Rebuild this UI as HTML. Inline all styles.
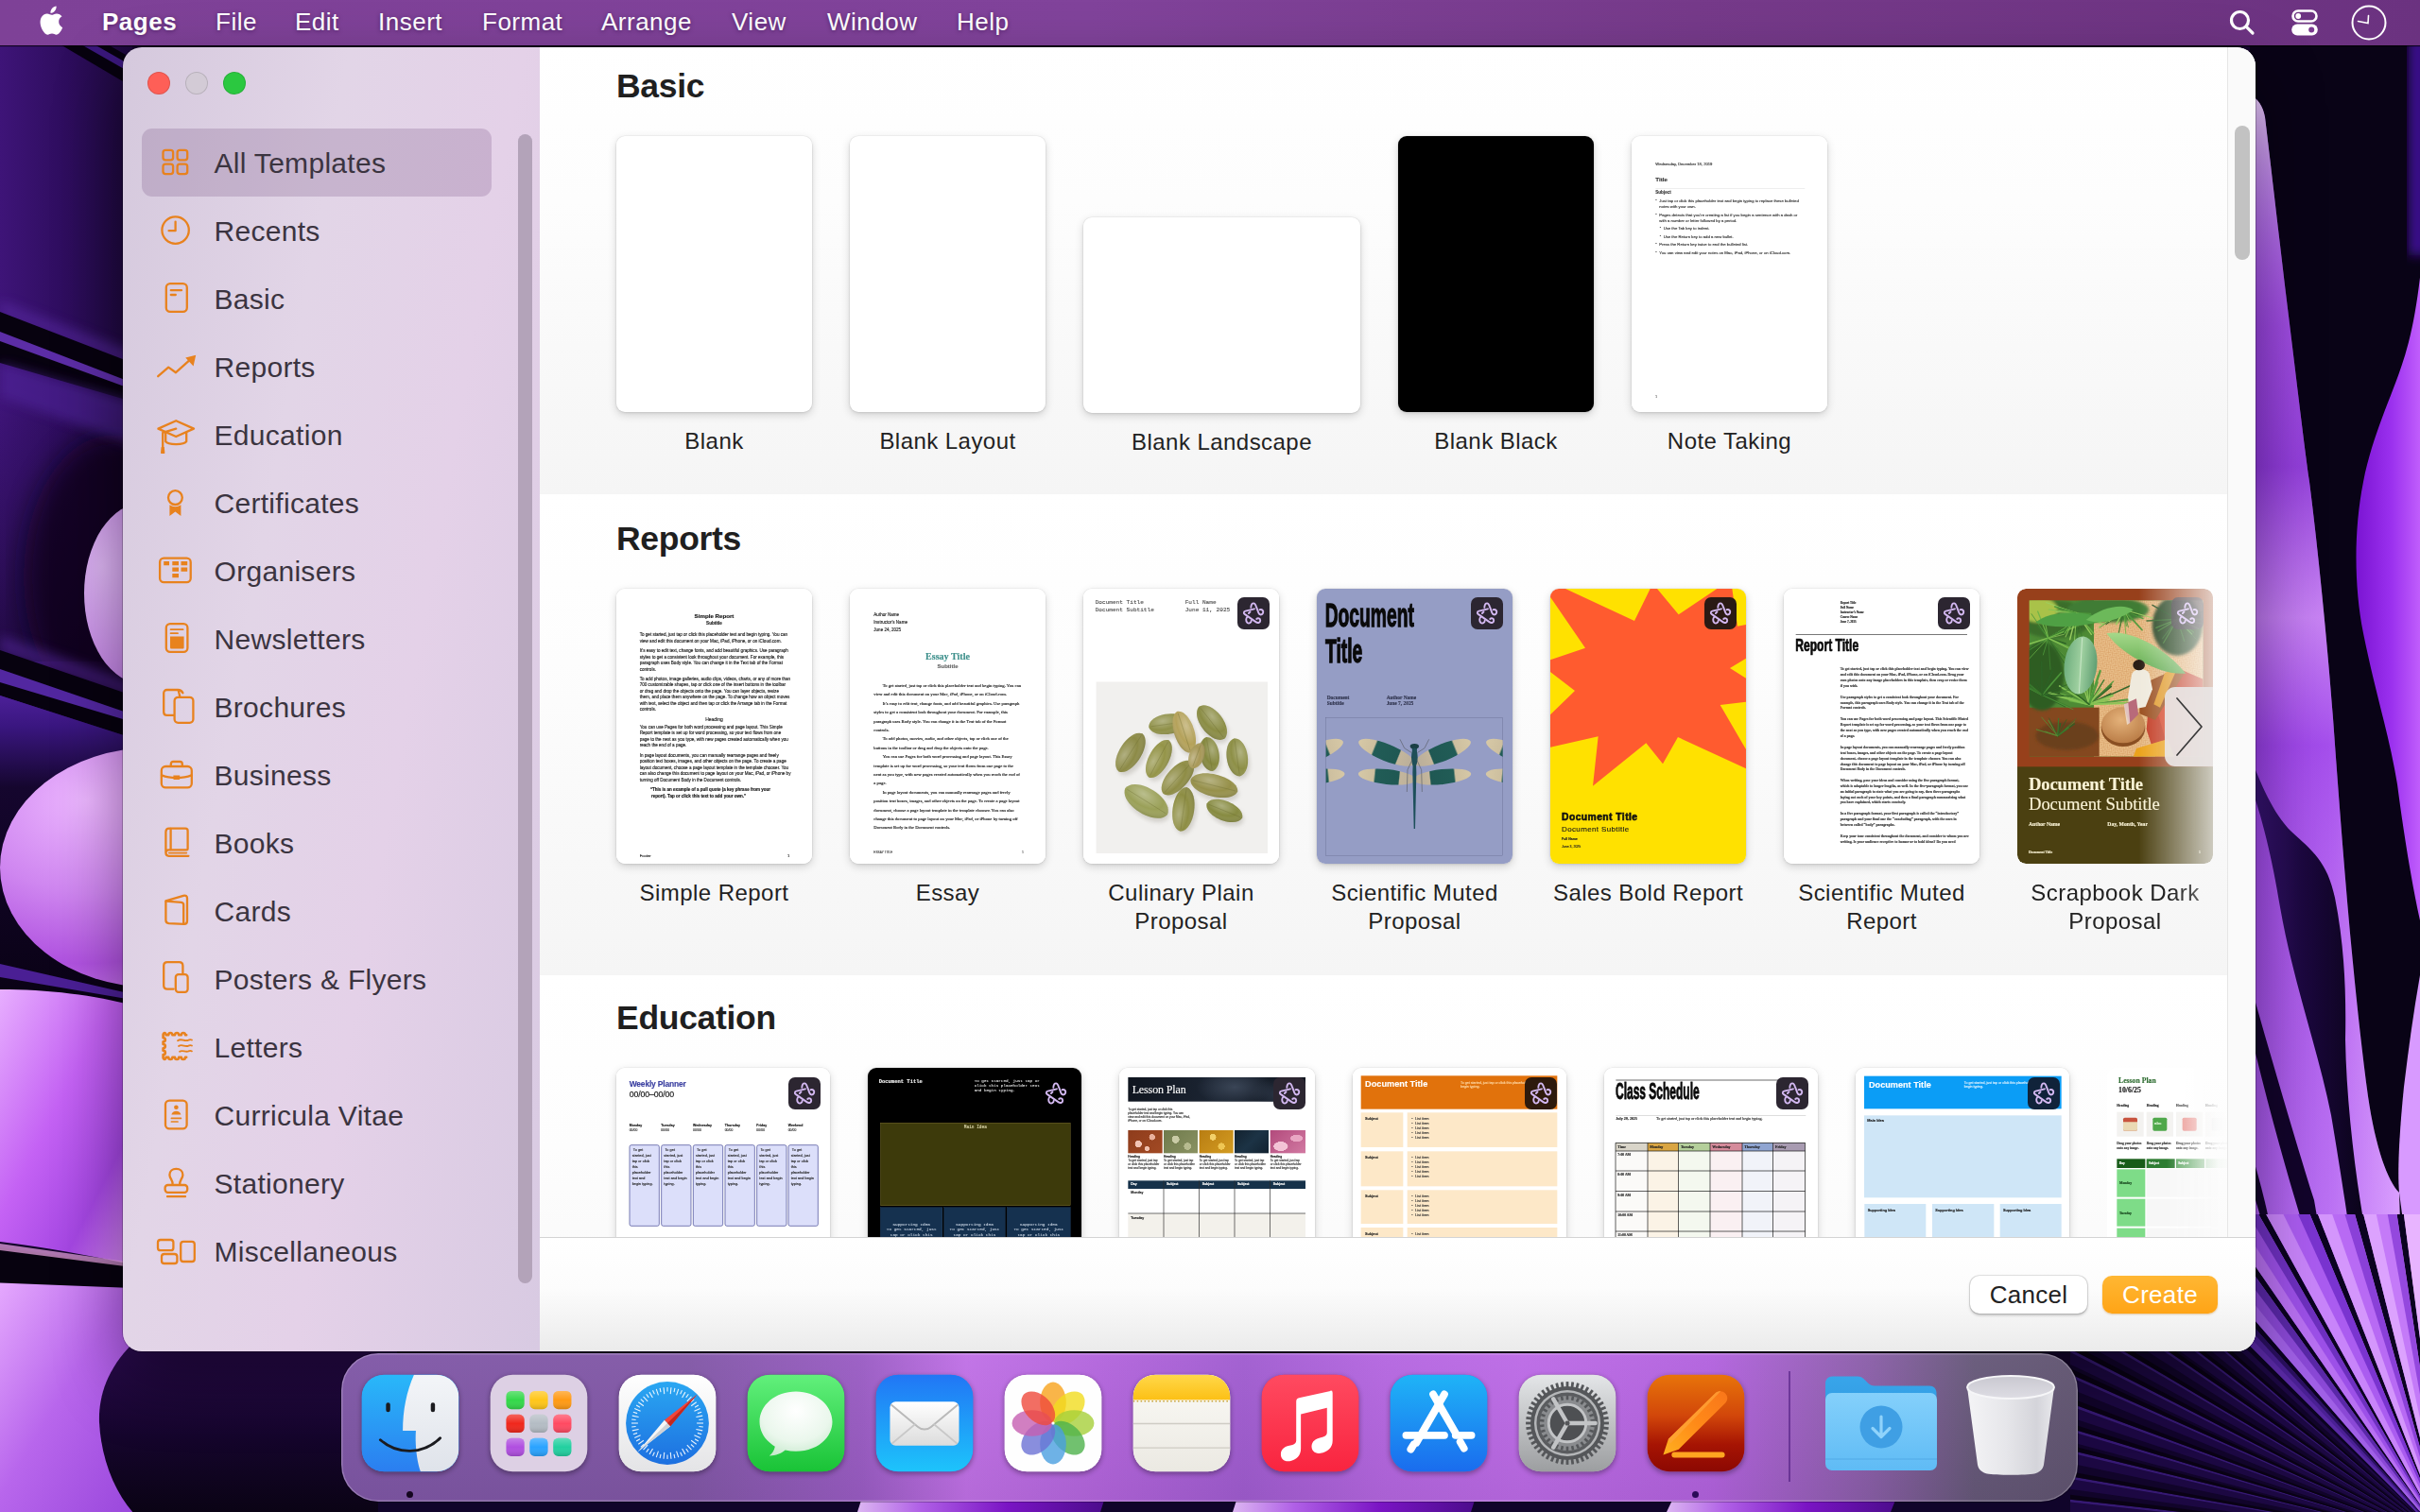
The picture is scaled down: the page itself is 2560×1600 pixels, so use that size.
<!DOCTYPE html>
<html lang="en">
<head>
<meta charset="utf-8">
<title>Pages — Choose a Template</title>
<style>
*{box-sizing:border-box;margin:0;padding:0}
html,body{width:2560px;height:1600px;overflow:hidden;background:#14042a}
body{position:relative;font-family:"Liberation Sans",sans-serif;color:#222}
.abs{position:absolute}
#wall{position:absolute;left:0;top:0;width:2560px;height:1600px}
#menubar{position:absolute;left:0;top:0;width:2560px;height:48px;background:linear-gradient(90deg,#7e4197 0,#81439b 45%,#763a8a 70%,#6b3280 100%);color:#fff;font-size:26px;box-shadow:0 1px 1px rgba(0,0,0,.7)}
#menubar span{position:absolute;top:7px;line-height:32px;white-space:nowrap;letter-spacing:.5px;text-shadow:0 1px 4px rgba(40,0,60,.5)}
#win{position:absolute;left:130px;top:50px;width:2256px;height:1380px;border-radius:20px;overflow:hidden;box-shadow:0 0 0 1px rgba(0,0,0,.22),0 30px 70px rgba(0,0,0,.4)}
#side{position:absolute;left:0;top:0;width:441px;height:1380px;background:linear-gradient(100deg,#d5c9dd 0,#e2d5e7 35%,#e4d1e8 62%,#d8cae2 100%)}
#side .sel{position:absolute;left:20px;top:86px;width:370px;height:72px;border-radius:11px;background:rgba(120,85,130,.25)}
#side .row{position:absolute;left:0;width:420px;height:72px;font-size:30px;line-height:72px;color:#3b3440}
#side .row b{position:absolute;left:96.500px;top:.5px;font-weight:400;white-space:nowrap;letter-spacing:.3px}
#side .row svg{position:absolute;left:31px;top:12px;width:48px;height:48px;fill:none;stroke:#e8821e;stroke-width:2.300;stroke-linecap:round;stroke-linejoin:round}
#side .row svg .f{fill:#e8821e;stroke:none}
#side .sbar{position:absolute;left:418px;top:92px;width:15px;height:1216px;border-radius:8px;background:#b3a3b9}
.tl{position:absolute;top:26px;width:24px;height:24px;border-radius:50%}
#main{position:absolute;left:441px;top:0;width:1815px;height:1380px;background:#fff;overflow:hidden}
.sec{position:absolute;left:0;width:1786px;background:linear-gradient(180deg,#fff 0,#fdfdfd 35%,#f5f5f5 100%)}
.sec h2{position:absolute;left:81px;font-size:35.500px;line-height:40px;font-weight:700;color:#1f1f1f;letter-spacing:-.3px}
.th{position:absolute;border-radius:9px;background:#fff;overflow:hidden;box-shadow:0 0 0 .5px rgba(0,0,0,.06),0 3px 10px rgba(0,0,0,.16),0 1px 3px rgba(0,0,0,.08)}
.lb{position:absolute;width:260px;text-align:center;font-size:24px;line-height:30px;letter-spacing:.45px;color:#222}
.bdg{position:absolute;width:34px;height:34px;border-radius:7px;background:#2c2631}
.bdg svg{position:absolute;left:0;top:0;width:34px;height:34px;fill:none;stroke:#d3b8f1;stroke-width:1.900;stroke-linecap:round;stroke-linejoin:round}
.t{position:absolute;white-space:nowrap;transform-origin:0 0;-webkit-text-stroke:.4px currentColor}
.p{position:absolute;transform-origin:0 0;color:#222;-webkit-text-stroke:.4px currentColor}
#foot{position:absolute;left:0;top:1259px;width:1815px;height:121px;background:linear-gradient(180deg,#fff 0,#fcfcfc 45%,#ebebeb 100%);border-top:1px solid #d4d4d4}
.btn{position:absolute;top:40px;height:40px;border-radius:10px;font-size:26px;line-height:40px;text-align:center;letter-spacing:.3px}
#dock{position:absolute;left:361px;top:1432px;width:1837px;height:157px;border-radius:39px;background:linear-gradient(180deg,rgba(255,255,255,.04) 0,rgba(0,0,0,.06) 100%),linear-gradient(90deg,#7f57a6 0,#8157a6 20%,#9a5cc4 30%,#c070e6 36%,#b264dc 44%,#a05cd0 52%,#b466e0 60%,#bc6ae6 68%,#b262de 79%,#8a5ea8 88%,#665879 94%,#605470 100%);box-shadow:inset 0 0 0 1.500px rgba(255,255,255,.22),0 0 0 1px rgba(0,0,0,.25)}
.di{position:absolute;top:22px;width:104px;height:104px;transform:scale(.987);border-radius:24px;overflow:hidden;box-shadow:0 2px 5px rgba(0,0,0,.3)}
</style>
</head>
<body>
<svg id="wall" viewBox="0 0 2560 1600">
<defs>
<linearGradient id="wl1" x1="0" x2="1" y1="0" y2="0"><stop offset="0" stop-color="#3e1478"/><stop offset=".5" stop-color="#2e0d5e"/><stop offset="1" stop-color="#1c083a"/></linearGradient>
<linearGradient id="wl2" x1="0" x2="0" y1="0" y2="1"><stop offset="0" stop-color="#1a0838" stop-opacity="0"/><stop offset="1" stop-color="#120428" stop-opacity=".9"/></linearGradient>
<linearGradient id="wl3" x1="0" x2="0" y1="0" y2="1"><stop offset="0" stop-color="#4c2098"/><stop offset=".1" stop-color="#3a1680"/><stop offset=".3" stop-color="#15062e"/><stop offset="1" stop-color="#090214"/></linearGradient>
<radialGradient id="pet1" cx=".15" cy=".35" r=".9"><stop offset="0" stop-color="#dcb4f2"/><stop offset=".6" stop-color="#c68ae6"/><stop offset="1" stop-color="#b06ad8"/></radialGradient>
<radialGradient id="pet2" cx=".28" cy=".22" r=".85"><stop offset="0" stop-color="#ecb6ff"/><stop offset=".45" stop-color="#cf86f0"/><stop offset=".8" stop-color="#b052e0"/><stop offset="1" stop-color="#c676ea"/></radialGradient>
<linearGradient id="pet3" x1="0" x2="1" y1="0" y2="1"><stop offset="0" stop-color="#eab4ff"/><stop offset=".45" stop-color="#c462f4"/><stop offset=".75" stop-color="#a446e2"/><stop offset="1" stop-color="#d68cf0"/></linearGradient>
<linearGradient id="pet4" x1="0" x2="1" y1="0" y2="1"><stop offset="0" stop-color="#e8adff"/><stop offset=".5" stop-color="#b866ec"/><stop offset="1" stop-color="#9a48dc"/></linearGradient>
<linearGradient id="dk1" x1="0" x2="0" y1="0" y2="1"><stop offset="0" stop-color="#2a0a4e"/><stop offset=".55" stop-color="#15052c"/><stop offset="1" stop-color="#0a0314"/></linearGradient>
<linearGradient id="rp1" x1="0" x2="1" y1="0" y2="0"><stop offset="0" stop-color="#9a48e0"/><stop offset=".55" stop-color="#b86af0"/><stop offset="1" stop-color="#e2a8ff"/></linearGradient>
<linearGradient id="rp1v" x1="0" x2="0" y1="0" y2="1"><stop offset="0" stop-color="#ecd6f8" stop-opacity=".9"/><stop offset=".1" stop-color="#c898ec" stop-opacity=".5"/><stop offset=".2" stop-color="#8a34d0" stop-opacity=".35"/><stop offset=".32" stop-color="#7a22cc" stop-opacity=".5"/><stop offset=".45" stop-color="#e0a8fa" stop-opacity=".45"/><stop offset=".56" stop-color="#9030e8" stop-opacity=".45"/><stop offset=".75" stop-color="#b060f0" stop-opacity=".15"/><stop offset="1" stop-color="#c890ff" stop-opacity=".3"/></linearGradient>
<linearGradient id="rp2" x1="0" x2="1" y1="0" y2="0"><stop offset="0" stop-color="#7a14d2"/><stop offset=".5" stop-color="#9a30ee"/><stop offset="1" stop-color="#c866ff"/></linearGradient>
<linearGradient id="fold" x1="0" x2="1" y1="0" y2="0"><stop offset="0" stop-color="#3a1478"/><stop offset=".45" stop-color="#1c0840"/><stop offset="1" stop-color="#0a0318"/></linearGradient>
<filter id="b2"><feGaussianBlur stdDeviation="2"/></filter>
<filter id="b6"><feGaussianBlur stdDeviation="6"/></filter>
<filter id="b14"><feGaussianBlur stdDeviation="14"/></filter>
</defs>
<rect width="2560" height="1600" fill="#14052c"/>

<g id="wl">
<rect x="0" y="40" width="140" height="1000" fill="url(#wl1)"/>
<rect x="0" y="430" width="140" height="270" fill="url(#wl2)" opacity=".75"/>
<ellipse cx="120" cy="610" rx="95" ry="150" fill="#0b0218" opacity=".75" filter="url(#b14)"/>
<polygon points="62,46 140,92 140,62 112,46" fill="#07020f"/>
<polygon points="84,46 140,78 140,70 98,46" fill="#3a177c"/>
<polygon points="0,318 140,372 140,392 0,334" fill="#5a2ba4" opacity=".55" filter="url(#b6)"/>
<polygon points="0,330 140,384 140,425 0,384" fill="#07020f"/>
<polygon points="0,351 140,405 140,412 0,361" fill="#5c2da6"/>
<polygon points="0,384 140,425 140,470 0,420" fill="#5326a0" opacity=".55" filter="url(#b6)"/>
<polygon points="0,672 140,722 140,740 0,690" fill="#5a2ba4" opacity=".5" filter="url(#b6)"/>
<polygon points="0,688 140,736 140,781 0,736" fill="#07020f"/>
<polygon points="0,708 140,756 140,764 0,722" fill="#5227a0"/>
<polygon points="0,736 140,781 140,1060 0,1060" fill="url(#wl3)"/>
<ellipse cx="152" cy="628" rx="63" ry="96" fill="url(#pet1)"/>
<ellipse cx="162" cy="918" rx="162" ry="127" fill="url(#pet2)"/>
<path d="M-10,1047 C40,1046 100,1052 140,1064 L140,1338 C90,1328 40,1318 -10,1313 Z" fill="url(#pet3)"/>
<polygon points="0,1020 140,1052 140,1058 0,1034" fill="#4a1f94"/>
<polygon points="0,1320 140,1339 140,1364 0,1358" fill="#07020f"/>
<polygon points="0,1316 140,1336 140,1341 0,1323" fill="#f0a6e8" opacity=".7"/>
<path d="M-10,1357 L140,1363 L140,1600 L-10,1600 Z" fill="url(#pet4)"/>
<path d="M140,1422 C112,1450 104,1480 105,1505 C107,1545 122,1580 142,1602 L420,1602 L420,1422 Z" fill="url(#dk1)"/>
</g>
<rect x="400" y="1575" width="1800" height="25" fill="#10042a"/>
<linearGradient id="bs1" x1="0" x2="1"><stop offset="0" stop-color="#dcb6f2"/><stop offset=".25" stop-color="#b060e6"/><stop offset=".6" stop-color="#7a14c4"/><stop offset="1" stop-color="#4a0c8a"/></linearGradient>
<polygon points="907,1600 915,1575 1172,1575 1164,1600" fill="url(#bs1)"/>
<polygon points="1304,1600 1312,1575 1564,1575 1556,1600" fill="url(#bs1)"/>
<polygon points="1763,1600 1775,1575 2010,1575 2000,1600" fill="url(#bs1)"/>
<g id="wr">
<rect x="2380" y="40" width="180" height="1300" fill="#090316"/>
<rect x="2548" y="40" width="20" height="230" fill="#3a0f8c" filter="url(#b6)"/>
<path d="M2566,236 C2560,300 2556,330 2548,362 C2536,410 2512,450 2500,510 C2490,560 2490,620 2500,670 C2512,730 2528,780 2536,830 C2545,900 2556,960 2566,1000 Z" fill="url(#rp2)"/>
<path d="M2380,100 C2388,104 2394,112 2396,124 C2404,190 2412,260 2418,310 C2428,390 2436,460 2443,510 C2452,580 2462,680 2468,760 C2478,900 2490,1050 2505,1160 C2513,1215 2526,1250 2538,1262 L2540,1330 L2380,1330 Z" fill="url(#rp1)"/>
<path d="M2380,100 C2388,104 2394,112 2396,124 C2404,190 2412,260 2418,310 C2428,390 2436,460 2443,510 C2452,580 2462,680 2468,760 C2478,900 2490,1050 2505,1160 C2513,1215 2526,1250 2538,1262 L2540,1330 L2380,1330 Z" fill="url(#rp1v)"/>
<path d="M2566,1000 C2556,1050 2549,1100 2543,1150 C2538,1200 2536,1240 2538,1262 L2547,1330 L2566,1330 Z" fill="#d89aff"/>
<path d="M2380,800 C2392,830 2404,860 2424,880 C2446,900 2462,912 2470,950 C2480,1000 2482,1050 2481,1100 C2482,1160 2490,1230 2499,1285 L2502,1340 L2490,1340 C2484,1290 2476,1240 2466,1180 C2452,1110 2426,1040 2412,960 C2404,910 2392,860 2380,830 Z" fill="url(#fold)"/>
<path d="M2380,1040 C2400,1110 2426,1200 2448,1270 L2460,1340 L2450,1340 C2430,1280 2404,1190 2380,1090 Z" fill="#12042a"/>
<path d="M2380,1215 C2388,1240 2394,1262 2400,1290 L2392,1290 L2380,1250 Z" fill="#12042a"/>
</g>
<clipPath id="fanclip"><polygon points="2190,1420 2380,1420 2380,1285 2566,1285 2566,1606 2190,1606"/></clipPath>
<g id="fan" clip-path="url(#fanclip)">
<polygon points="2200,1420 2380,1420 2380,1240 2566,1240 2566,1606 2200,1606" fill="#0c0320"/>
<polygon points="2588.0,1632.0 1588.6,1666.9 1893.3,912.7" fill="#11042a"/>
<polygon points="2588.0,1632.0 1588.3,1605.8 1589.4,1579.7" fill="#1f0a48" opacity="0.80"/>
<polygon points="2588.0,1632.0 1589.4,1579.7 1589.8,1572.7" fill="#43208c" opacity="0.75"/>
<polygon points="2588.0,1632.0 1589.8,1572.7 1590.6,1560.5" fill="#07020f" opacity="0.80"/>
<polygon points="2588.0,1632.0 1591.2,1551.8 1593.7,1525.7" fill="#1f0a48" opacity="0.80"/>
<polygon points="2588.0,1632.0 1593.7,1525.7 1594.4,1518.8" fill="#43208c" opacity="0.75"/>
<polygon points="2588.0,1632.0 1594.4,1518.8 1595.9,1506.7" fill="#07020f" opacity="0.80"/>
<polygon points="2588.0,1632.0 1597.9,1492.0 1601.9,1466.1" fill="#1f0a48" opacity="0.80"/>
<polygon points="2588.0,1632.0 1601.9,1466.1 1603.0,1459.2" fill="#43208c" opacity="0.75"/>
<polygon points="2588.0,1632.0 1603.0,1459.2 1605.2,1447.2" fill="#07020f" opacity="0.80"/>
<polygon points="2588.0,1632.0 1609.3,1426.6 1615.0,1401.1" fill="#1f0a48" opacity="0.80"/>
<polygon points="2588.0,1632.0 1615.0,1401.1 1616.7,1394.3" fill="#43208c" opacity="0.75"/>
<polygon points="2588.0,1632.0 1616.7,1394.3 1619.6,1382.5" fill="#07020f" opacity="0.80"/>
<polygon points="2588.0,1632.0 1621.8,1374.0 1628.9,1348.8" fill="#1f0a48" opacity="0.80"/>
<polygon points="2588.0,1632.0 1628.9,1348.8 1630.9,1342.1" fill="#43208c" opacity="0.75"/>
<polygon points="2588.0,1632.0 1630.9,1342.1 1634.5,1330.5" fill="#07020f" opacity="0.80"/>
<polygon points="2588.0,1632.0 1639.1,1316.4 1647.7,1291.6" fill="#1f0a48" opacity="0.80"/>
<polygon points="2588.0,1632.0 1647.7,1291.6 1650.1,1285.1" fill="#43208c" opacity="0.75"/>
<polygon points="2588.0,1632.0 1650.1,1285.1 1654.4,1273.6" fill="#07020f" opacity="0.80"/>
<polygon points="2588.0,1632.0 1662.1,1254.2 1672.3,1230.1" fill="#1f0a48" opacity="0.80"/>
<polygon points="2588.0,1632.0 1672.3,1230.1 1675.2,1223.7" fill="#43208c" opacity="0.75"/>
<polygon points="2588.0,1632.0 1675.2,1223.7 1680.2,1212.5" fill="#07020f" opacity="0.80"/>
<polygon points="2588.0,1632.0 1683.9,1204.6 1695.4,1181.1" fill="#1f0a48" opacity="0.80"/>
<polygon points="2588.0,1632.0 1695.4,1181.1 1698.6,1174.9" fill="#43208c" opacity="0.75"/>
<polygon points="2588.0,1632.0 1698.6,1174.9 1704.2,1164.1" fill="#07020f" opacity="0.80"/>
<polygon points="2588.0,1632.0 1711.3,1151.0 1724.2,1128.2" fill="#1f0a48" opacity="0.80"/>
<polygon points="2588.0,1632.0 1724.2,1128.2 1727.7,1122.2" fill="#43208c" opacity="0.75"/>
<polygon points="2588.0,1632.0 1727.7,1122.2 1734.0,1111.7" fill="#07020f" opacity="0.80"/>
<polygon points="2588.0,1632.0 1745.1,1094.0 1759.5,1072.1" fill="#1f0a48" opacity="0.80"/>
<polygon points="2588.0,1632.0 1759.5,1072.1 1763.4,1066.3" fill="#43208c" opacity="0.75"/>
<polygon points="2588.0,1632.0 1763.4,1066.3 1770.4,1056.3" fill="#07020f" opacity="0.80"/>
<polygon points="2588.0,1632.0 1775.4,1049.2 1790.9,1028.1" fill="#1f0a48" opacity="0.80"/>
<polygon points="2588.0,1632.0 1790.9,1028.1 1795.2,1022.5" fill="#43208c" opacity="0.75"/>
<polygon points="2588.0,1632.0 1795.2,1022.5 1802.7,1012.9" fill="#07020f" opacity="0.80"/>
<polygon points="2588.0,1632.0 1812.0,1001.3 1828.7,981.2" fill="#1f0a48" opacity="0.80"/>
<polygon points="2588.0,1632.0 1828.7,981.2 1833.3,975.9" fill="#43208c" opacity="0.75"/>
<polygon points="2588.0,1632.0 1833.3,975.9 1841.4,966.8" fill="#07020f" opacity="0.80"/>
<polygon points="2588.0,1632.0 1855.5,951.3 1873.5,932.3" fill="#1f0a48" opacity="0.80"/>
<polygon points="2588.0,1632.0 1873.5,932.3 1878.4,927.4" fill="#43208c" opacity="0.75"/>
<polygon points="2588.0,1632.0 1878.4,927.4 1887.1,918.7" fill="#07020f" opacity="0.80"/>
<polygon points="2588.0,1632.0 1868.7,937.3 2640.3,633.4" fill="#0b0320"/>
<polygon points="2588.0,1632.0 1880.9,924.9 1921.5,886.5" fill="#4a2094"/>
<polygon points="2588.0,1632.0 1880.9,924.9 1896.1,910.0" fill="#5a2aa6"/>
<polygon points="2588.0,1632.0 1909.9,897.0 1921.5,886.5" fill="#2a0f60"/>
<polygon points="2588.0,1632.0 1934.6,875.0 2004.5,819.9" fill="#8a48d6"/>
<polygon points="2588.0,1632.0 1934.6,875.0 1960.6,853.3" fill="#a060e6"/>
<polygon points="2588.0,1632.0 1984.4,834.7 2004.5,819.9" fill="#5a28a8"/>
<polygon points="2588.0,1632.0 2018.7,809.9 2091.0,764.2" fill="#9c50e8"/>
<polygon points="2588.0,1632.0 2018.7,809.9 2045.7,791.8" fill="#b870f2"/>
<polygon points="2588.0,1632.0 2070.4,776.4 2091.0,764.2" fill="#6e30c0"/>
<polygon points="2588.0,1632.0 2106.2,755.7 2203.7,708.8" fill="#aa5cf0"/>
<polygon points="2588.0,1632.0 2106.2,755.7 2142.7,736.6" fill="#c884fa"/>
<polygon points="2588.0,1632.0 2175.9,720.9 2203.7,708.8" fill="#7a34d0"/>
<polygon points="2588.0,1632.0 2223.1,700.9 2319.1,668.8" fill="#b86af4"/>
<polygon points="2588.0,1632.0 2223.1,700.9 2259.2,687.6" fill="#d496fc"/>
<polygon points="2588.0,1632.0 2291.9,676.8 2319.1,668.8" fill="#8a40d8"/>
<polygon points="2588.0,1632.0 2342.7,662.6 2438.5,643.2" fill="#c47af8"/>
<polygon points="2588.0,1632.0 2342.7,662.6 2378.9,654.1" fill="#dca2fe"/>
<polygon points="2588.0,1632.0 2411.5,647.7 2438.5,643.2" fill="#9448de"/>
<polygon points="2588.0,1632.0 2459.2,640.3 2622.9,632.6" fill="#d690fb"/>
<polygon points="2588.0,1632.0 2459.2,640.3 2521.2,634.2" fill="#e8b4ff"/>
<polygon points="2588.0,1632.0 2577.0,632.1 2622.9,632.6" fill="#b060ec"/>
</g>
</svg>
<div id="menubar">
<svg class="abs" style="left:40px;top:6px" width="28" height="34" viewBox="0 0 28 34"><path fill="#fff" d="M19.6 0.4c.2 1.9-.5 3.700-1.600 5-1.100 1.400-2.900 2.400-4.600 2.300-.2-1.800.6-3.600 1.600-4.800C16.100 1.500 18.100.5 19.600.4zM25.500 11.300c-.3.200-3.300 1.900-3.300 5.700 0 4.400 3.900 5.900 4 6-.1.100-.6 2.100-2 4.100-1.200 1.800-2.500 3.500-4.500 3.600-1.900 0-2.500-1.200-4.700-1.200s-2.900 1.100-4.700 1.200c-1.900.1-3.400-1.900-4.600-3.700C3.200 23.400 1.200 16.700 3.800 12.200c1.300-2.200 3.600-3.600 6.100-3.700 1.900 0 3.700 1.300 4.800 1.300 1.200 0 3.300-1.600 5.600-1.400 1 .1 3.600.400 5.200 2.900z"/></svg>
<span style="left:108px;font-weight:700">Pages</span>
<span style="left:228px">File</span>
<span style="left:312px">Edit</span>
<span style="left:400px">Insert</span>
<span style="left:510px">Format</span>
<span style="left:636px">Arrange</span>
<span style="left:774px">View</span>
<span style="left:875px">Window</span>
<span style="left:1012px">Help</span>
<svg class="abs" style="left:2354px;top:6px" width="36" height="36" viewBox="0 0 36 36" fill="none" stroke="#fff" stroke-width="3.200" stroke-linecap="round"><circle cx="15.500" cy="15.500" r="9"/><path d="M22.300 22.300L29 29"/></svg>
<svg class="abs" style="left:2422px;top:8px" width="32" height="32" viewBox="0 0 32 32"><rect x="3.500" y="3.500" width="25" height="11" rx="5.500" fill="none" stroke="#fff" stroke-width="2.600"/><circle cx="9.200" cy="9" r="2.900" fill="#fff"/><rect x="2.200" y="17.500" width="27.600" height="12" rx="6" fill="#fff"/><circle cx="23.200" cy="23.500" r="3" fill="#7a3a90"/></svg>
<svg class="abs" style="left:2486px;top:4px" width="40" height="40" viewBox="0 0 40 40" fill="none" stroke="#fff" stroke-width="2" stroke-linecap="round"><circle cx="20" cy="20" r="17.500"/><path d="M8.500 18.500L19 20.500L19.500 12.500" stroke-width="1.600"/></svg>
</div>

<div id="win">
<div id="side">
<div class="tl" style="left:26px;background:#fe5f57;box-shadow:inset 0 0 0 1px rgba(0,0,0,.12)"></div>
<div class="tl" style="left:66px;background:#d3cbd6;box-shadow:inset 0 0 0 1px rgba(0,0,0,.13)"></div>
<div class="tl" style="left:106px;background:#2bc840;box-shadow:inset 0 0 0 1px rgba(0,0,0,.12)"></div>
<div class="sel"></div>
<div class="row" style="top:86px"><svg viewBox="0 0 48 48"><rect x="11.500" y="10.800" width="10.600" height="10.600" rx="2.600"/><rect x="26.600" y="10.800" width="10.600" height="10.600" rx="2.600"/><rect x="11.500" y="25.600" width="10.600" height="10.600" rx="2.600"/><rect x="26.600" y="25.600" width="10.600" height="10.600" rx="2.600"/></svg><b>All Templates</b></div>
<div class="row" style="top:158px"><svg viewBox="0 0 48 48"><circle cx="24.600" cy="23.600" r="14.200"/><path d="M24.600 14.600V24.200H17.600"/></svg><b>Recents</b></div>
<div class="row" style="top:230px"><svg viewBox="0 0 48 48"><rect x="14.800" y="8.100" width="22" height="29.800" rx="4.200"/><path d="M19.800 15.200H31M19.800 20H24.800"/></svg><b>Basic</b></div>
<div class="row" style="top:302px"><svg viewBox="0 0 48 48"><path d="M6.200 34.200L17.200 24.600L25 30.200L39 17.600"/><path class="f" d="M46.200 11.800L35.200 14.600L43.600 23.400Z"/></svg><b>Reports</b></div>
<div class="row" style="top:374px"><svg viewBox="0 0 48 48"><path d="M25.200 9.200L44 17.600L25.200 26L6.400 17.600Z"/><path d="M14.200 22V31.200C16.500 35 33.900 35 36.200 31.200V22"/><path d="M25.200 17.600L11.200 21.800V37.500"/><path class="f" d="M9.600 37h3.200l.6 6.200c0 1.200-4.400 1.200-4.400 0z"/></svg><b>Education</b></div>
<div class="row" style="top:446px"><svg viewBox="0 0 48 48"><circle cx="24.400" cy="18.600" r="7.400"/><path class="f" d="M18.400 26.200c3.600 2.600 8.400 2.600 12 0V38l-6-4.600-6 4.600z"/></svg><b>Certificates</b></div>
<div class="row" style="top:518px"><svg viewBox="0 0 48 48"><rect x="8.100" y="10.700" width="32.600" height="25.400" rx="4.200"/><path class="f" d="M12.200 14h5.800v4.200h-5.800zM21.300 14h6.700v4.200h-6.700zM30.500 14h6.700v4.200h-6.700zM21.300 20.500h6.700v4.200h-6.700zM30.500 20.500h6.700v4.200h-6.700zM21.300 27h6.700v4.200h-6.700z"/></svg><b>Organisers</b></div>
<div class="row" style="top:590px"><svg viewBox="0 0 48 48"><rect x="14.800" y="8.100" width="22.600" height="29.800" rx="4.200"/><path d="M19.600 14.200H32.600M19.600 18.200H27" stroke-width="1.800"/><path class="f" d="M19 21.600h14.600v11.600c0 .8-.6 1.400-1.400 1.400H20.400c-.8 0-1.400-.6-1.400-1.400z"/></svg><b>Newsletters</b></div>
<div class="row" style="top:662px"><svg viewBox="0 0 48 48"><path d="M22.800 32.800H15.600c-2 0-3.400-1.400-3.400-3.400V9.400c0-2 1.400-3.400 3.400-3.400H27.200c2.200 0 4.200 1 5.200 3.200"/><path d="M27.600 6.200L29.400 13.600"/><rect x="23.600" y="13.800" width="19.800" height="27" rx="3.800"/></svg><b>Brochures</b></div>
<div class="row" style="top:734px"><svg viewBox="0 0 48 48"><g transform="translate(0 2.800)"><rect x="9.800" y="12.200" width="32" height="22.400" rx="4.400"/><path d="M19.800 12V9.600c0-1.400 1-2.400 2.400-2.400h7.200c1.400 0 2.400 1 2.400 2.400V12"/><path d="M10 21.600c9 3.600 22.600 3.600 31.600 0"/><path class="f" d="M22.400 21.800h6.800v3.400c0 .6-.4 1-1 1h-4.800c-.6 0-1-.4-1-1z"/></g></svg><b>Business</b></div>
<div class="row" style="top:806px"><svg viewBox="0 0 48 48"><path d="M14.400 34.400V12.200c0-2.200 1.400-3.600 3.600-3.600H35c1.600 0 2.600 1 2.600 2.600V30.200c0 .8-.4 1.200-1.200 1.200H17.600c-4.200 0-4.200 6.400 0 6.400H38.400"/><path d="M19.600 9V31"/><path d="M17.600 34.600H36.400" stroke-width="1.600"/></svg><b>Books</b></div>
<div class="row" style="top:878px"><svg viewBox="0 0 48 48"><path d="M14.400 13.400L33 7.800C35.400 7.200 37 8.200 37 10.600V34.400c0 2-1.200 3.400-3.200 3.400L17.600 37.200c-2-.2-3.200-1.400-3.200-3.400z"/><path d="M14.600 13.600L30.800 14.800c1.600.2 2.400 1 2.400 2.600V37.600"/></svg><b>Cards</b></div>
<div class="row" style="top:950px"><svg viewBox="0 0 48 48"><path d="M22.600 34.600H16c-2.400 0-3.800-1.400-3.800-3.800V10c0-2.400 1.400-3.800 3.800-3.800H28.600c2.400 0 3.800 1.400 3.800 3.800V18"/><rect x="24.800" y="19.200" width="12.800" height="18.600" rx="3"/></svg><b>Posters &amp; Flyers</b></div>
<div class="row" style="top:1022px"><svg viewBox="0 0 48 48"><path d="M36.200 11.200H35c0-3-4.200-3-4.200 0h-2.600c0-3-4.200-3-4.200 0h-2.600c0-3-4.200-3-4.200 0h-2.600c0-3-3.400-2.600-3 .4v2.600c3 0 3 4.200 0 4.200v2.600c3 0 3 4.200 0 4.200v2.600c3 0 3 4.200 0 4.200v2.400c-.4 3 3 3.400 3 .4h2.600c0 3 4.200 3 4.200 0h2.600c0 3 4.200 3 4.200 0h2.600c0 3 4.200 3 4.200 0h1.200" stroke-width="2.600"/><path d="M27 17.200c4-3 7 1.600 11.400-.6c1.400-.8 2.600-.6 3.600 0M28 23c3.600-2.600 6.600 1.400 10.400-.4c1.400-.8 2.600-.6 3.600 0M29 28.800c3.200-2.400 6 1.200 9.400-.4c1.400-.8 2.600-.6 3.600 0" stroke-width="1.800"/></svg><b>Letters</b></div>
<div class="row" style="top:1094px"><svg viewBox="0 0 48 48"><rect x="14" y="8.600" width="22.600" height="29.800" rx="4.200"/><circle class="f" cx="25.400" cy="15.800" r="2.300"/><path class="f" d="M20.400 23.600c.6-5.200 9.400-5.200 10 0z"/><path d="M20.400 27.400H30.400M20.400 31H27" stroke-width="1.700"/></svg><b>Curricula Vitae</b></div>
<div class="row" style="top:1166px"><svg viewBox="0 0 48 48"><path d="M21.600 25.800c1-4-3.200-6.800-3.200-10.600c0-4 3-6.400 7-6.400s7 2.400 7 6.400c0 3.800-4.200 6.600-3.200 10.600"/><rect x="13.600" y="26" width="23.600" height="7.800" rx="3"/><path d="M16 38.200H35"/></svg><b>Stationery</b></div>
<div class="row" style="top:1238px"><svg viewBox="0 0 48 48"><rect x="6" y="12" width="16.400" height="11.200" rx="2.800"/><rect x="10" y="27" width="16.400" height="10" rx="2.800"/><rect x="30.200" y="13.800" width="14.600" height="21.200" rx="2.800"/></svg><b>Miscellaneous</b></div>
<div class="sbar"></div>
</div>
<div id="main">
<div class="sec" style="top:-5px;height:478px"><h2 style="top:25.500px">Basic</h2>
<div class="th" style="left:81px;top:99px;width:207px;height:292px;"></div>
<div class="lb" style="left:54.5px;top:407px;">Blank</div>
<div class="th" style="left:328px;top:99px;width:207px;height:292px;"></div>
<div class="lb" style="left:301.5px;top:407px;">Blank Layout</div>
<div class="th" style="left:575px;top:185px;width:293px;height:207px;"></div>
<div class="lb" style="left:591.5px;top:408px;">Blank Landscape</div>
<div class="th" style="left:908px;top:99px;width:207px;height:292px;background:#000"></div>
<div class="lb" style="left:881.5px;top:407px;">Blank Black</div>
<div class="th" style="left:1155px;top:99px;width:207px;height:292px;"><div class="abs" style="left:0;top:0;width:621px;height:876px;background:#fff;transform:scale(.333333);transform-origin:0 0"><div class="t" style="left:76.0px;top:83.0px;font-size:12.4px;line-height:14.3px;color:#333">Wednesday, December 18, 2019</div><div class="t" style="left:76.0px;top:126.0px;font-size:18.7px;line-height:21.5px;font-weight:700;color:#333">Title</div><div class="abs" style="left:76px;top:166px;width:474px;height:1px;background:#ccc"></div><div class="t" style="left:76.0px;top:171.0px;font-size:13.6px;line-height:15.6px;color:#333;font-weight:700">Subject</div><div class="t" style="left:76.0px;top:197.0px;font-size:12.0px;line-height:13.8px;color:#333">•</div><div class="p" style="left:88.0px;top:196.5px;width:470.0px;font-size:12.70px;line-height:18.00px;color:#333;white-space:nowrap">Just tap or click this placeholder text and begin typing to replace these bulleted<br>notes with your own.</div><div class="t" style="left:76.0px;top:241.0px;font-size:12.0px;line-height:13.8px;color:#333">•</div><div class="p" style="left:88.0px;top:240.5px;width:470.0px;font-size:12.70px;line-height:18.00px;color:#333;white-space:nowrap">Pages detects that you’re creating a list if you begin a sentence with a dash or<br>with a number or letter followed by a period.</div><div class="t" style="left:89.0px;top:284.0px;font-size:12.0px;line-height:13.8px;color:#333">•</div><div class="p" style="left:101.0px;top:283.5px;width:470.0px;font-size:12.70px;line-height:18.00px;color:#333;white-space:nowrap">Use the Tab key to indent.</div><div class="t" style="left:89.0px;top:310.0px;font-size:12.0px;line-height:13.8px;color:#333">•</div><div class="p" style="left:101.0px;top:309.5px;width:470.0px;font-size:12.70px;line-height:18.00px;color:#333;white-space:nowrap">Use the Return key to add a new bullet.</div><div class="t" style="left:76.0px;top:336.0px;font-size:12.0px;line-height:13.8px;color:#333">•</div><div class="p" style="left:88.0px;top:335.5px;width:470.0px;font-size:12.70px;line-height:18.00px;color:#333;white-space:nowrap">Press the Return key twice to end the bulleted list.</div><div class="t" style="left:76.0px;top:362.0px;font-size:12.0px;line-height:13.8px;color:#333">•</div><div class="p" style="left:88.0px;top:361.5px;width:470.0px;font-size:12.70px;line-height:18.00px;color:#333;white-space:nowrap">You can view and edit your notes on Mac, iPad, iPhone, or on iCloud.com.</div><div class="t" style="left:76.0px;top:822.0px;font-size:9.0px;line-height:10.3px;color:#555">1</div></div></div>
<div class="lb" style="left:1128.5px;top:407px;">Note Taking</div>
</div>
<div class="sec" style="top:473px;height:509px"><h2 style="top:27px">Reports</h2>
<div class="th" style="left:81px;top:99.5px;width:207px;height:291px;"><div class="abs" style="left:0;top:0;width:621px;height:876px;background:#fff;transform:scale(.333333);transform-origin:0 0"><div class="t" style="left:0.0px;top:76.0px;font-size:18.5px;line-height:21.3px;width:621px;text-align:center;font-weight:700;color:#111">Simple Report</div><div class="t" style="left:0.0px;top:103.0px;font-size:13.8px;line-height:15.9px;width:621px;text-align:center;font-weight:700;color:#222">Subtitle</div><div class="p" style="left:74.0px;top:137.0px;font-size:13.75px;line-height:19.40px;white-space:nowrap;color:#1a1a1a;white-space:nowrap">To get started, just tap or click this placeholder text and begin typing. You can<br>view and edit this document on your Mac, iPad, iPhone, or on iCloud.com.</div><div class="p" style="left:74.0px;top:188.0px;font-size:13.75px;line-height:19.40px;white-space:nowrap;color:#1a1a1a;white-space:nowrap">It’s easy to edit text, change fonts, and add beautiful graphics. Use paragraph<br>styles to get a consistent look throughout your document. For example, this<br>paragraph uses Body style. You can change it in the Text tab of the Format<br>controls.</div><div class="p" style="left:74.0px;top:277.0px;font-size:13.75px;line-height:19.40px;white-space:nowrap;color:#1a1a1a;white-space:nowrap">To add photos, image galleries, audio clips, videos, charts, or any of more than<br>700 customizable shapes, tap or click one of the insert buttons in the toolbar<br>or drag and drop the objects onto the page. You can layer objects, resize<br>them, and place them anywhere on the page. To change how an object moves<br>with text, select the object and then tap or click the Arrange tab in the Format<br>controls.</div><div class="t" style="left:0.0px;top:406.0px;font-size:15.0px;line-height:17.2px;width:621px;text-align:center;color:#222">Heading</div><div class="p" style="left:74.0px;top:430.0px;font-size:13.75px;line-height:19.40px;white-space:nowrap;color:#1a1a1a;white-space:nowrap">You can use Pages for both word processing and page layout. This Simple<br>Report template is set up for word processing, so your text flows from one<br>page to the next as you type, with new pages created automatically when you<br>reach the end of a page.</div><div class="p" style="left:74.0px;top:519.0px;font-size:13.75px;line-height:19.40px;white-space:nowrap;color:#1a1a1a;white-space:nowrap">In page layout documents, you can manually rearrange pages and freely<br>position text boxes, images, and other objects on the page. To create a page<br>layout document, choose a page layout template in the template chooser. You<br>can also change this document to page layout on your Mac, iPad, or iPhone by<br>turning off Document Body in the Document controls.</div><div class="p" style="left:107.0px;top:629.0px;font-size:13.60px;line-height:20.50px;white-space:nowrap;color:#111;font-weight:700">“This is an example of a pull quote (a key phrase from your<br>&nbsp;report). Tap or click this text to add your own.”</div><div class="t" style="left:74.0px;top:841.0px;font-size:12.5px;line-height:14.4px;color:#222">Footer</div><div class="t" style="left:543.0px;top:841.0px;font-size:12.5px;line-height:14.4px;color:#222">1</div></div></div>
<div class="lb" style="left:54.5px;top:407px;">Simple Report</div>
<div class="th" style="left:328px;top:99.5px;width:207px;height:291px;"><div class="abs" style="left:0;top:0;width:621px;height:876px;background:#fff;transform:scale(.333333);transform-origin:0 0"><div class="t" style="left:76.0px;top:76.0px;font-size:13.6px;line-height:15.6px;color:#222">Author Name</div><div class="t" style="left:76.0px;top:99.5px;font-size:13.6px;line-height:15.6px;color:#222">Instructor’s Name</div><div class="t" style="left:76.0px;top:123.0px;font-size:13.6px;line-height:15.6px;color:#222">June 24, 2025</div><div class="t" style="left:0.0px;top:199.0px;font-size:30.3px;line-height:34.8px;width:621px;text-align:center;font-weight:700;color:#3e908c;font-family:'Liberation Serif',serif;">Essay Title</div><div class="t" style="left:0.0px;top:237.0px;font-size:18.0px;line-height:20.7px;width:621px;text-align:center;font-weight:700;color:#666">Subtitle</div><div class="p" style="left:76.0px;top:293.0px;font-size:14.10px;line-height:28.20px;white-space:nowrap;font-family:'Liberation Serif',serif;color:#1a1a1a;text-indent:28px">To get started, just tap or click this placeholder text and begin typing. You can<br>view and edit this document on your Mac, iPad, iPhone, or on iCloud.com.</div><div class="p" style="left:76.0px;top:349.4px;font-size:14.10px;line-height:28.20px;white-space:nowrap;font-family:'Liberation Serif',serif;color:#1a1a1a;text-indent:28px">It’s easy to edit text, change fonts, and add beautiful graphics. Use paragraph<br>styles to get a consistent look throughout your document. For example, this<br>paragraph uses Body style. You can change it in the Text tab of the Format<br>controls.</div><div class="p" style="left:76.0px;top:462.2px;font-size:14.10px;line-height:28.20px;white-space:nowrap;font-family:'Liberation Serif',serif;color:#1a1a1a;text-indent:28px">To add photos, movies, audio, and other objects, tap or click one of the<br>buttons in the toolbar or drag and drop the objects onto the page.</div><div class="p" style="left:76.0px;top:518.6px;font-size:14.10px;line-height:28.20px;white-space:nowrap;font-family:'Liberation Serif',serif;color:#1a1a1a;text-indent:28px">You can use Pages for both word processing and page layout. This Essay<br>template is set up for word processing, so your text flows from one page to the<br>next as you type, with new pages created automatically when you reach the end of<br>a page.</div><div class="p" style="left:76.0px;top:631.4px;font-size:14.10px;line-height:28.20px;white-space:nowrap;font-family:'Liberation Serif',serif;color:#1a1a1a;text-indent:28px">In page layout documents, you can manually rearrange pages and freely<br>position text boxes, images, and other objects on the page. To create a page layout<br>document, choose a page layout template in the template chooser. You can also<br>change this document to page layout on your Mac, iPad, or iPhone by turning off<br>Document Body in the Document controls.</div><div class="t" style="left:76.0px;top:831.0px;font-size:9.2px;line-height:10.6px;color:#444;letter-spacing:.3px">ESSAY TITLE</div><div class="t" style="left:547.0px;top:832.0px;font-size:8.0px;line-height:9.2px;color:#444">1</div></div></div>
<div class="lb" style="left:301.5px;top:407px;">Essay</div>
<div class="th" style="left:575px;top:99.5px;width:207px;height:291px;"><div class="abs" style="left:0;top:0;width:621px;height:876px;background:#fff;transform:scale(.333333);transform-origin:0 0"><div class="t" style="left:38.0px;top:34.0px;font-size:18.3px;line-height:21.0px;font-family:'Liberation Mono',monospace;color:#4a4a4a;-webkit-text-stroke:.3px #4a4a4a">Document Title</div><div class="t" style="left:38.0px;top:56.5px;font-size:18.3px;line-height:21.0px;font-family:'Liberation Mono',monospace;color:#4a4a4a;-webkit-text-stroke:.3px #4a4a4a">Document Subtitle</div><div class="t" style="left:323.0px;top:34.0px;font-size:18.3px;line-height:21.0px;font-family:'Liberation Mono',monospace;color:#4a4a4a;-webkit-text-stroke:.3px #4a4a4a">Full Name</div><div class="t" style="left:323.0px;top:56.5px;font-size:18.3px;line-height:21.0px;font-family:'Liberation Mono',monospace;color:#4a4a4a;-webkit-text-stroke:.3px #4a4a4a">June 11, 2025</div><svg class="abs" style="left:40px;top:295px" width="545" height="545" viewBox="40 295 545 545"><defs><radialGradient id="podg" cx=".38" cy=".32" r=".8"><stop offset="0" stop-color="#fff" stop-opacity=".32"/><stop offset=".55" stop-color="#fff" stop-opacity="0"/><stop offset="1" stop-color="#2a2a00" stop-opacity=".32"/></radialGradient><filter id="pshadow"><feGaussianBlur stdDeviation="7"/></filter></defs><rect x="40" y="295" width="545" height="545" fill="#f1f0ee"/><ellipse cx="274" cy="442" rx="58" ry="33" transform="rotate(-8 274 442)" fill="#b9b6ae" opacity=".55" filter="url(#pshadow)"/><ellipse cx="326" cy="467" rx="66" ry="33" transform="rotate(72 326 467)" fill="#b9b6ae" opacity=".55" filter="url(#pshadow)"/><ellipse cx="414" cy="437" rx="62" ry="36" transform="rotate(52 414 437)" fill="#b9b6ae" opacity=".55" filter="url(#pshadow)"/><ellipse cx="156" cy="532" rx="68" ry="36" transform="rotate(-58 156 532)" fill="#b9b6ae" opacity=".55" filter="url(#pshadow)"/><ellipse cx="246" cy="552" rx="64" ry="33" transform="rotate(-62 246 552)" fill="#b9b6ae" opacity=".55" filter="url(#pshadow)"/><ellipse cx="406" cy="537" rx="52" ry="31" transform="rotate(80 406 537)" fill="#b9b6ae" opacity=".55" filter="url(#pshadow)"/><ellipse cx="494" cy="547" rx="58" ry="34" transform="rotate(82 494 547)" fill="#b9b6ae" opacity=".55" filter="url(#pshadow)"/><ellipse cx="306" cy="612" rx="66" ry="34" transform="rotate(-48 306 612)" fill="#b9b6ae" opacity=".55" filter="url(#pshadow)"/><ellipse cx="421" cy="637" rx="74" ry="36" transform="rotate(14 421 637)" fill="#b9b6ae" opacity=".55" filter="url(#pshadow)"/><ellipse cx="206" cy="687" rx="76" ry="42" transform="rotate(32 206 687)" fill="#b9b6ae" opacity=".55" filter="url(#pshadow)"/><ellipse cx="324" cy="712" rx="68" ry="35" transform="rotate(-82 324 712)" fill="#b9b6ae" opacity=".55" filter="url(#pshadow)"/><ellipse cx="454" cy="717" rx="58" ry="32" transform="rotate(22 454 717)" fill="#b9b6ae" opacity=".55" filter="url(#pshadow)"/><ellipse cx="366" cy="542" rx="40" ry="24" transform="rotate(-70 366 542)" fill="#b9b6ae" opacity=".55" filter="url(#pshadow)"/><g transform="rotate(-8 268 430)"><path d="M207 430C214 387 321 387 329 430C321 472 214 472 207 430Z" fill="#8f9048"/><path d="M207 430C214 387 321 387 329 430C321 472 214 472 207 430Z" fill="url(#podg)"/><path d="M214 430H322" stroke="#66662c" stroke-width="1.600" opacity=".55" fill="none"/><path d="M216 415C244 403 291 403 320 415" stroke="#a8a860" stroke-width="1.400" opacity=".5" fill="none"/></g><g transform="rotate(72 320 455)"><path d="M251 455C259 412 380 412 389 455C380 497 259 497 251 455Z" fill="#b5a25a"/><path d="M251 455C259 412 380 412 389 455C380 497 259 497 251 455Z" fill="url(#podg)"/><path d="M258 455H382" stroke="#66662c" stroke-width="1.600" opacity=".55" fill="none"/><path d="M260 440C293 428 346 428 380 440" stroke="#a8a860" stroke-width="1.400" opacity=".5" fill="none"/></g><g transform="rotate(52 408 425)"><path d="M343 425C350 378 465 378 473 425C465 471 350 471 343 425Z" fill="#8a8c44"/><path d="M343 425C350 378 465 378 473 425C465 471 350 471 343 425Z" fill="url(#podg)"/><path d="M350 425H466" stroke="#66662c" stroke-width="1.600" opacity=".55" fill="none"/><path d="M352 408C383 396 432 396 464 408" stroke="#a8a860" stroke-width="1.400" opacity=".5" fill="none"/></g><g transform="rotate(-58 150 520)"><path d="M79 520C87 473 212 473 221 520C212 566 87 566 79 520Z" fill="#8c8a46"/><path d="M79 520C87 473 212 473 221 520C212 566 87 566 79 520Z" fill="url(#podg)"/><path d="M86 520H214" stroke="#66662c" stroke-width="1.600" opacity=".55" fill="none"/><path d="M88 503C122 491 177 491 212 503" stroke="#a8a860" stroke-width="1.400" opacity=".5" fill="none"/></g><g transform="rotate(-62 240 540)"><path d="M173 540C181 497 298 497 307 540C298 582 181 582 173 540Z" fill="#949448"/><path d="M173 540C181 497 298 497 307 540C298 582 181 582 173 540Z" fill="url(#podg)"/><path d="M180 540H300" stroke="#66662c" stroke-width="1.600" opacity=".55" fill="none"/><path d="M182 525C214 513 265 513 298 525" stroke="#a8a860" stroke-width="1.400" opacity=".5" fill="none"/></g><g transform="rotate(80 400 525)"><path d="M345 525C352 484 447 484 455 525C447 565 352 565 345 525Z" fill="#85883f"/><path d="M345 525C352 484 447 484 455 525C447 565 352 565 345 525Z" fill="url(#podg)"/><path d="M352 525H448" stroke="#66662c" stroke-width="1.600" opacity=".55" fill="none"/><path d="M354 511C379 500 420 500 446 511" stroke="#a8a860" stroke-width="1.400" opacity=".5" fill="none"/></g><g transform="rotate(82 488 535)"><path d="M427 535C434 490 541 490 549 535C541 579 434 579 427 535Z" fill="#8d8f46"/><path d="M427 535C434 490 541 490 549 535C541 579 434 579 427 535Z" fill="url(#podg)"/><path d="M434 535H542" stroke="#66662c" stroke-width="1.600" opacity=".55" fill="none"/><path d="M436 519C464 507 511 507 540 519" stroke="#a8a860" stroke-width="1.400" opacity=".5" fill="none"/></g><g transform="rotate(-48 300 600)"><path d="M231 600C239 555 360 555 369 600C360 644 239 644 231 600Z" fill="#8e8c45"/><path d="M231 600C239 555 360 555 369 600C360 644 239 644 231 600Z" fill="url(#podg)"/><path d="M238 600H362" stroke="#66662c" stroke-width="1.600" opacity=".55" fill="none"/><path d="M240 584C273 572 326 572 360 584" stroke="#a8a860" stroke-width="1.400" opacity=".5" fill="none"/></g><g transform="rotate(14 415 625)"><path d="M338 625C346 578 483 578 492 625C483 671 346 671 338 625Z" fill="#96904a"/><path d="M338 625C346 578 483 578 492 625C483 671 346 671 338 625Z" fill="url(#podg)"/><path d="M345 625H485" stroke="#66662c" stroke-width="1.600" opacity=".55" fill="none"/><path d="M347 608C385 596 444 596 483 608" stroke="#a8a860" stroke-width="1.400" opacity=".5" fill="none"/></g><g transform="rotate(32 200 675)"><path d="M121 675C130 620 269 620 279 675C269 729 130 729 121 675Z" fill="#9aa058"/><path d="M121 675C130 620 269 620 279 675C269 729 130 729 121 675Z" fill="url(#podg)"/><path d="M128 675H272" stroke="#66662c" stroke-width="1.600" opacity=".55" fill="none"/><path d="M130 656C169 641 230 641 270 656" stroke="#a8a860" stroke-width="1.400" opacity=".5" fill="none"/></g><g transform="rotate(-82 318 700)"><path d="M247 700C255 654 380 654 389 700C380 745 255 745 247 700Z" fill="#8d8d43"/><path d="M247 700C255 654 380 654 389 700C380 745 255 745 247 700Z" fill="url(#podg)"/><path d="M254 700H382" stroke="#66662c" stroke-width="1.600" opacity=".55" fill="none"/><path d="M256 684C290 672 345 672 380 684" stroke="#a8a860" stroke-width="1.400" opacity=".5" fill="none"/></g><g transform="rotate(22 448 705)"><path d="M387 705C394 663 501 663 509 705C501 746 394 746 387 705Z" fill="#868a40"/><path d="M387 705C394 663 501 663 509 705C501 746 394 746 387 705Z" fill="url(#podg)"/><path d="M394 705H502" stroke="#66662c" stroke-width="1.600" opacity=".55" fill="none"/><path d="M396 690C424 679 471 679 500 690" stroke="#a8a860" stroke-width="1.400" opacity=".5" fill="none"/></g><g transform="rotate(-70 360 530)"><path d="M317 530C323 498 396 498 403 530C396 561 323 561 317 530Z" fill="#a89858"/><path d="M317 530C323 498 396 498 403 530C396 561 323 561 317 530Z" fill="url(#podg)"/><path d="M324 530H396" stroke="#66662c" stroke-width="1.600" opacity=".55" fill="none"/><path d="M326 519C344 510 376 510 394 519" stroke="#a8a860" stroke-width="1.400" opacity=".5" fill="none"/></g></svg></div><div class="bdg" style="right:10px;top:9.500px"><svg viewBox="0 0 34 34"><path d="M17.900 12.300L8.400 14.700C6.600 15.200 6.300 16.800 7.700 17.900L19.800 26.400C21.800 27.800 24.300 26.700 24.200 24.500C24.100 22.500 21.800 21.600 20.200 22.900"/><path d="M14.300 10.900C14.500 8.200 15.600 6.400 17.100 6.400C18.500 6.400 19.200 7.800 19.800 9.600L22.400 16.700C23.300 19 26.200 19.100 27.100 16.700C27.900 14.400 26 12.400 23.600 13.200"/><path d="M10.600 20.600C8.900 22.200 8.600 25.400 10.500 26.900C12.300 28.200 14.600 27 14.700 24.800"/><path d="M11.900 17L13.500 15.300"/></svg></div></div>
<div class="lb" style="left:548.5px;top:407px;">Culinary Plain<br>Proposal</div>
<div class="th" style="left:822px;top:99.5px;width:207px;height:291px;"><div class="abs" style="left:0;top:0;width:621px;height:876px;background:#959dc5;transform:scale(.333333);transform-origin:0 0"><div class="t" style="left:26.0px;top:30.0px;font-size:106.0px;line-height:121.9px;font-weight:700;color:#0a0a0a;letter-spacing:0px;-webkit-text-stroke:4px #0a0a0a;transform:scaleX(.545);line-height:106px">Document</div><div class="t" style="left:27.0px;top:144.0px;font-size:106.0px;line-height:121.9px;font-weight:700;color:#0a0a0a;letter-spacing:0px;-webkit-text-stroke:4px #0a0a0a;transform:scaleX(.545);line-height:106px">Title</div><div class="t" style="left:32.0px;top:338.0px;font-size:16.2px;line-height:18.6px;font-family:'Liberation Serif',serif;font-weight:700;color:#30344e">Document</div><div class="t" style="left:32.0px;top:356.3px;font-size:16.2px;line-height:18.6px;font-family:'Liberation Serif',serif;font-weight:700;color:#30344e">Subtitle</div><div class="t" style="left:221.0px;top:338.0px;font-size:16.2px;line-height:18.6px;font-family:'Liberation Serif',serif;font-weight:700;color:#30344e">Author Name</div><div class="t" style="left:221.0px;top:356.3px;font-size:16.2px;line-height:18.6px;font-family:'Liberation Serif',serif;font-weight:700;color:#30344e">June 7, 2025</div><div class="abs" style="left:28px;top:410px;width:563px;height:437px;border:1.500px solid #5e6488"></div><svg class="abs" style="left:29px;top:411px" width="561" height="435" viewBox="29 411 561 435"><defs><linearGradient id="wingR" x1="0" x2="1"><stop offset="0" stop-color="#b8ad9a"/><stop offset=".28" stop-color="#c4b69c"/><stop offset=".3" stop-color="#1f5853"/><stop offset=".7" stop-color="#215c56"/><stop offset=".73" stop-color="#cdbf9f"/><stop offset="1" stop-color="#d6c8a6"/></linearGradient><linearGradient id="wingL" x1="1" x2="0"><stop offset="0" stop-color="#b8ad9a"/><stop offset=".28" stop-color="#c4b69c"/><stop offset=".3" stop-color="#1f5853"/><stop offset=".7" stop-color="#215c56"/><stop offset=".73" stop-color="#cdbf9f"/><stop offset="1" stop-color="#d6c8a6"/></linearGradient></defs><ellipse cx="400" cy="520" rx="95" ry="27" transform="rotate(-22 400 520)" fill="url(#wingR)"/><ellipse cx="398" cy="597" rx="92" ry="24" transform="rotate(-6 398 597)" fill="url(#wingR)"/><ellipse cx="221" cy="520" rx="95" ry="27" transform="rotate(22 221 520)" fill="url(#wingL)"/><ellipse cx="223" cy="597" rx="92" ry="24" transform="rotate(6 223 597)" fill="url(#wingL)"/><ellipse cx="626" cy="520" rx="95" ry="27" transform="rotate(22 626 520)" fill="url(#wingL)"/><ellipse cx="628" cy="597" rx="92" ry="24" transform="rotate(6 628 597)" fill="url(#wingL)"/><ellipse cx="-5" cy="520" rx="95" ry="27" transform="rotate(-22 -5 520)" fill="url(#wingR)"/><ellipse cx="-3" cy="597" rx="92" ry="24" transform="rotate(-6 -3 597)" fill="url(#wingR)"/><path d="M310 498c-5 0-8 4-8 10s3 10 4 16l-2 60 4 178h4l4-178-2-60c1-6 4-10 4-16s-3-10-8-10z" fill="#1d4f5a"/><ellipse cx="310" cy="500" rx="14" ry="8" fill="#1b3f45"/><ellipse cx="310" cy="535" rx="10" ry="30" fill="#1f4f58"/><path d="M300 520l-22-14-14-28M320 520l22-14 14-28M302 545l-14 30-2 70M318 545l14 30 2 70" stroke="#5b5f6a" stroke-width="2" fill="none"/></svg></div><div class="bdg" style="right:10px;top:9.500px"><svg viewBox="0 0 34 34"><path d="M17.900 12.300L8.400 14.700C6.600 15.200 6.300 16.800 7.700 17.900L19.800 26.400C21.800 27.800 24.300 26.700 24.200 24.500C24.100 22.500 21.800 21.600 20.200 22.900"/><path d="M14.300 10.900C14.500 8.200 15.600 6.400 17.100 6.400C18.500 6.400 19.200 7.800 19.800 9.600L22.400 16.700C23.300 19 26.200 19.100 27.100 16.700C27.900 14.400 26 12.400 23.600 13.200"/><path d="M10.600 20.600C8.900 22.200 8.600 25.400 10.500 26.900C12.300 28.200 14.600 27 14.700 24.800"/><path d="M11.900 17L13.500 15.300"/></svg></div></div>
<div class="lb" style="left:795.5px;top:407px;">Scientific Muted<br>Proposal</div>
<div class="th" style="left:1069px;top:99.5px;width:207px;height:291px;"><div class="abs" style="left:0;top:0;width:621px;height:876px;background:#ffe100;transform:scale(.333333);transform-origin:0 0"><svg class="abs" style="left:0;top:0" width="621" height="876" viewBox="0 0 621 876"><polygon points="0,0 48,0 267,102 317,0 339,0 407,82 529,0 577,0 594,119 621,114 621,221 570,252 621,284 621,359 539,369 621,510 621,571 405,471 357,556 304,490 135,626 152,469 0,503 0,400 78,324 0,264 0,226 111,188 0,26" fill="#ff5b2f"/></svg><div class="t" style="left:36.0px;top:706.0px;font-size:31.0px;line-height:35.6px;font-weight:700;color:#111;letter-spacing:1.3px;-webkit-text-stroke:1.6px #111">Document Title</div><div class="t" style="left:36.0px;top:748.0px;font-size:24.0px;line-height:27.6px;color:#1a1a1a;letter-spacing:1.1px">Document Subtitle</div><div class="t" style="left:36.0px;top:789.0px;font-size:10.5px;line-height:12.1px;color:#222;font-weight:700">Full Name</div><div class="t" style="left:36.0px;top:811.0px;font-size:10.5px;line-height:12.1px;color:#222">June 3, 2025</div></div><div class="bdg" style="background:#2a1a14;right:10px;top:9.500px"><svg viewBox="0 0 34 34"><path d="M17.900 12.300L8.400 14.700C6.600 15.200 6.300 16.800 7.700 17.900L19.800 26.400C21.800 27.800 24.300 26.700 24.200 24.500C24.100 22.500 21.800 21.600 20.200 22.900"/><path d="M14.300 10.900C14.500 8.200 15.600 6.400 17.100 6.400C18.500 6.400 19.200 7.800 19.800 9.600L22.400 16.700C23.300 19 26.200 19.100 27.100 16.700C27.900 14.400 26 12.400 23.600 13.200"/><path d="M10.600 20.600C8.900 22.200 8.600 25.400 10.500 26.900C12.300 28.200 14.600 27 14.700 24.800"/><path d="M11.900 17L13.500 15.300"/></svg></div></div>
<div class="lb" style="left:1042.5px;top:407px;">Sales Bold Report</div>
<div class="th" style="left:1316px;top:99.5px;width:207px;height:291px;"><div class="abs" style="left:0;top:0;width:621px;height:876px;background:#fff;transform:scale(.333333);transform-origin:0 0"><div class="t" style="left:179.0px;top:38.5px;font-size:9.6px;line-height:11.0px;font-family:'Liberation Serif',serif;font-weight:700;color:#222">Report Title</div><div class="t" style="left:179.0px;top:53.6px;font-size:9.6px;line-height:11.0px;font-family:'Liberation Serif',serif;font-weight:700;color:#222">Full Name</div><div class="t" style="left:179.0px;top:68.7px;font-size:9.6px;line-height:11.0px;font-family:'Liberation Serif',serif;font-weight:700;color:#222">Instructor’s Name</div><div class="t" style="left:179.0px;top:83.8px;font-size:9.6px;line-height:11.0px;font-family:'Liberation Serif',serif;font-weight:700;color:#222">Course Name</div><div class="t" style="left:179.0px;top:98.9px;font-size:9.6px;line-height:11.0px;font-family:'Liberation Serif',serif;font-weight:700;color:#222">June 7, 2025</div><div class="abs" style="left:38px;top:145px;width:544px;height:1.500px;background:#333"></div><div class="t" style="left:37.0px;top:150.0px;font-size:54.0px;line-height:62.1px;font-weight:700;color:#0a0a0a;transform:scaleX(.67);letter-spacing:0;line-height:60px;-webkit-text-stroke:2.200px #0a0a0a">Report Title</div><div class="p" style="left:179.0px;top:246.0px;width:408.0px;font-size:11.50px;line-height:17.60px;font-family:'Liberation Serif',serif;font-weight:700;color:#333">To get started, just tap or click this placeholder text and begin typing. You can view and edit this document on your Mac, iPad, iPhone, or on iCloud.com. Drag your own photos onto any image placeholders in this template, then crop or resize them if you wish.</div><div class="p" style="left:179.0px;top:335.0px;width:408.0px;font-size:11.50px;line-height:17.60px;font-family:'Liberation Serif',serif;font-weight:700;color:#333">Use paragraph styles to get a consistent look throughout your document. For example, this paragraph uses Body style. You can change it in the Text tab of the Format controls.</div><div class="p" style="left:179.0px;top:406.0px;width:408.0px;font-size:11.50px;line-height:17.60px;font-family:'Liberation Serif',serif;font-weight:700;color:#333">You can use Pages for both word processing and page layout. This Scientific Muted Report template is set up for word processing, so your text flows from one page to the next as you type, with new pages created automatically when you reach the end of a page.</div><div class="p" style="left:179.0px;top:495.0px;width:408.0px;font-size:11.50px;line-height:17.60px;font-family:'Liberation Serif',serif;font-weight:700;color:#333">In page layout documents, you can manually rearrange pages and freely position text boxes, images, and other objects on the page. To create a page layout document, choose a page layout template in the template chooser. You can also change this document to page layout on your Mac, iPad, or iPhone by turning off Document Body in the Document controls.</div><div class="p" style="left:179.0px;top:600.0px;width:408.0px;font-size:11.50px;line-height:17.60px;font-family:'Liberation Serif',serif;font-weight:700;color:#333">When writing, pose your ideas and consider using the five paragraph format, which is adaptable to longer lengths, as well. In the five-paragraph format, you use an initial paragraph to state what you are going to say, then three paragraphs laying out each of your key points, and then a final paragraph summarizing what you have explained, which starts concisely.</div><div class="p" style="left:179.0px;top:706.0px;width:408.0px;font-size:11.50px;line-height:17.60px;font-family:'Liberation Serif',serif;font-weight:700;color:#333">In a five paragraph format, your first paragraph is called the “introductory” paragraph and your final one the “concluding” paragraph, with the ones in between called “body” paragraphs.</div><div class="p" style="left:179.0px;top:778.0px;width:408.0px;font-size:11.50px;line-height:17.60px;font-family:'Liberation Serif',serif;font-weight:700;color:#333">Keep your tone consistent throughout the document, and consider to whom you are writing. Is your audience receptive to humor or to bold ideas? Do you need</div></div><div class="bdg" style="right:10px;top:9.500px"><svg viewBox="0 0 34 34"><path d="M17.900 12.300L8.400 14.700C6.600 15.200 6.300 16.800 7.700 17.900L19.800 26.400C21.800 27.800 24.300 26.700 24.200 24.500C24.100 22.500 21.800 21.600 20.200 22.900"/><path d="M14.300 10.900C14.500 8.200 15.600 6.400 17.100 6.400C18.500 6.400 19.200 7.800 19.800 9.600L22.400 16.700C23.300 19 26.200 19.100 27.100 16.700C27.900 14.400 26 12.400 23.600 13.200"/><path d="M10.600 20.600C8.900 22.200 8.600 25.400 10.500 26.900C12.300 28.200 14.600 27 14.700 24.800"/><path d="M11.900 17L13.500 15.300"/></svg></div></div>
<div class="lb" style="left:1289.5px;top:407px;">Scientific Muted<br>Report</div>
<div class="th" style="left:1563px;top:99.5px;width:207px;height:291px;-webkit-mask-image:linear-gradient(90deg,#000 0,#000 62%,rgba(0,0,0,.25) 100%);box-shadow:none"><div class="abs" style="left:0;top:0;width:621px;height:876px;background:#97401b;transform:scale(.333333);transform-origin:0 0"><div class="abs" style="left:0;top:565px;width:621px;height:311px;background:#4b4011"></div><svg class="abs" style="left:38px;top:37px" width="552" height="496" viewBox="0 0 552 496"><defs><pattern id="tl" width="13" height="13" patternUnits="userSpaceOnUse" patternTransform="rotate(8)"><rect width="13" height="13" fill="#dba56c"/><rect width="11" height="11" fill="#e9bf8a"/><rect x="3" y="3" width="4" height="4" fill="#c9824a" opacity=".6"/></pattern><filter id="pb"><feGaussianBlur stdDeviation="4"/></filter><filter id="pb1"><feGaussianBlur stdDeviation="1.200"/></filter><linearGradient id="lf1" x1="0" x2="1"><stop offset="0" stop-color="#6fae7e"/><stop offset=".5" stop-color="#9fd0a0"/><stop offset="1" stop-color="#5f9e72"/></linearGradient><linearGradient id="lf2" x1="0" x2="0" y1="0" y2="1"><stop offset="0" stop-color="#a6d98a"/><stop offset="1" stop-color="#5aa64a"/></linearGradient><radialGradient id="tb" cx=".45" cy=".35" r=".7"><stop offset="0" stop-color="#e4b27a"/><stop offset="1" stop-color="#b87a44"/></radialGradient></defs><rect width="552" height="496" fill="#4d8a35"/><rect x="205" y="0" width="347" height="496" fill="url(#tl)"/><rect x="0" y="340" width="222" height="156" fill="#84481f"/><polygon points="385,262 470,215 552,250 552,496 400,496 372,410" fill="#c23a22"/><polygon points="400,330 552,300 552,420 440,470" fill="#d9482c" opacity=".8"/><polygon points="340,470 440,440 460,496 330,496" fill="#eba31c"/><polygon points="350,270 470,215 490,235 400,380 350,360" fill="#9a4f1f"/><polygon points="430,230 470,215 415,340 395,330" fill="#e09a2a"/><g filter="url(#pb)"><ellipse cx="80" cy="60" rx="120" ry="60" fill="#3a6d2a"/><ellipse cx="40" cy="240" rx="70" ry="110" fill="#2f5d22"/><ellipse cx="250" cy="30" rx="130" ry="40" fill="#3f7c34"/><ellipse cx="470" cy="80" rx="80" ry="95" fill="#24401c"/><ellipse cx="120" cy="430" rx="100" ry="45" fill="#6a3f1a"/><ellipse cx="30" cy="30" rx="60" ry="40" fill="#a9c24a"/></g><g stroke-linecap="round" fill="none" opacity=".95"><path d="M190 330L174 221" stroke="#86c455" stroke-width="4.8"/><path d="M190 330L259 296" stroke="#2d6226" stroke-width="4.9"/><path d="M190 330L217 258" stroke="#86c455" stroke-width="4.2"/><path d="M190 330L62 293" stroke="#9ccf62" stroke-width="5.5"/><path d="M190 330L218 239" stroke="#86c455" stroke-width="5.6"/><path d="M190 330L216 261" stroke="#4f9a3c" stroke-width="6.3"/><path d="M190 330L128 318" stroke="#6db548" stroke-width="5.4"/><path d="M190 330L259 273" stroke="#2d6226" stroke-width="6.4"/><path d="M190 330L197 213" stroke="#86c455" stroke-width="3.0"/><path d="M190 330L75 299" stroke="#86c455" stroke-width="7.0"/><path d="M190 330L326 328" stroke="#9ccf62" stroke-width="4.0"/><path d="M190 330L267 257" stroke="#4f9a3c" stroke-width="3.3"/><path d="M190 330L261 266" stroke="#3b7a2e" stroke-width="4.5"/><path d="M190 330L325 312" stroke="#4f9a3c" stroke-width="3.9"/><path d="M190 330L253 315" stroke="#86c455" stroke-width="6.9"/><path d="M190 330L169 267" stroke="#9ccf62" stroke-width="3.8"/><path d="M190 330L237 253" stroke="#3b7a2e" stroke-width="4.3"/><path d="M190 330L317 316" stroke="#4f9a3c" stroke-width="3.5"/><path d="M190 330L227 281" stroke="#86c455" stroke-width="6.2"/><path d="M190 330L96 272" stroke="#86c455" stroke-width="5.0"/><path d="M190 330L319 324" stroke="#86c455" stroke-width="5.6"/><path d="M190 330L99 295" stroke="#6db548" stroke-width="3.0"/><path d="M190 330L325 269" stroke="#2d6226" stroke-width="4.2"/><path d="M190 330L264 302" stroke="#86c455" stroke-width="7.0"/><path d="M190 330L225 224" stroke="#4f9a3c" stroke-width="7.0"/><path d="M190 330L125 278" stroke="#2d6226" stroke-width="4.3"/><path d="M60 120L44 173" stroke="#4f9a3c" stroke-width="2.6"/><path d="M60 120L27 81" stroke="#3b7a2e" stroke-width="3.1"/><path d="M60 120L-52 154" stroke="#86c455" stroke-width="4.5"/><path d="M60 120L111 178" stroke="#9ccf62" stroke-width="2.5"/><path d="M60 120L150 62" stroke="#6db548" stroke-width="4.2"/><path d="M60 120L111 199" stroke="#2d6226" stroke-width="2.6"/><path d="M60 120L166 86" stroke="#2d6226" stroke-width="2.2"/><path d="M60 120L115 137" stroke="#2d6226" stroke-width="4.9"/><path d="M60 120L67 219" stroke="#3b7a2e" stroke-width="3.3"/><path d="M60 120L130 72" stroke="#2d6226" stroke-width="2.5"/><path d="M60 120L50 66" stroke="#6db548" stroke-width="3.4"/><path d="M60 120L7 43" stroke="#4f9a3c" stroke-width="2.8"/><path d="M60 120L116 88" stroke="#4f9a3c" stroke-width="2.2"/><path d="M60 120L3 156" stroke="#4f9a3c" stroke-width="2.5"/><path d="M60 120L-1 186" stroke="#6db548" stroke-width="2.3"/><path d="M60 120L113 182" stroke="#3b7a2e" stroke-width="4.0"/><path d="M60 120L27 35" stroke="#6db548" stroke-width="3.8"/><path d="M60 120L134 82" stroke="#3b7a2e" stroke-width="4.1"/><path d="M60 120L110 108" stroke="#9ccf62" stroke-width="2.2"/><path d="M60 120L125 149" stroke="#6db548" stroke-width="5.0"/><path d="M60 120L139 160" stroke="#9ccf62" stroke-width="2.1"/><path d="M60 120L154 80" stroke="#6db548" stroke-width="4.4"/><path d="M150 40L85 37" stroke="#9ccf62" stroke-width="3.4"/><path d="M150 40L246 67" stroke="#4f9a3c" stroke-width="4.6"/><path d="M150 40L115 116" stroke="#86c455" stroke-width="3.1"/><path d="M150 40L195 42" stroke="#4f9a3c" stroke-width="3.9"/><path d="M150 40L54 7" stroke="#9ccf62" stroke-width="3.0"/><path d="M150 40L62 29" stroke="#86c455" stroke-width="3.3"/><path d="M150 40L105 50" stroke="#2d6226" stroke-width="2.1"/><path d="M150 40L113 104" stroke="#6db548" stroke-width="4.9"/><path d="M150 40L237 76" stroke="#9ccf62" stroke-width="4.8"/><path d="M150 40L176 72" stroke="#3b7a2e" stroke-width="2.4"/><path d="M150 40L109 104" stroke="#3b7a2e" stroke-width="4.0"/><path d="M150 40L153 142" stroke="#3b7a2e" stroke-width="3.2"/><path d="M150 40L204 105" stroke="#6db548" stroke-width="4.6"/><path d="M150 40L168 119" stroke="#3b7a2e" stroke-width="2.6"/><path d="M150 40L208 69" stroke="#4f9a3c" stroke-width="4.1"/><path d="M150 40L92 30" stroke="#6db548" stroke-width="2.3"/><path d="M150 40L142 145" stroke="#86c455" stroke-width="3.1"/><path d="M150 40L129 124" stroke="#9ccf62" stroke-width="4.5"/><path d="M150 40L81 20" stroke="#4f9a3c" stroke-width="4.5"/><path d="M150 40L197 108" stroke="#9ccf62" stroke-width="4.1"/><path d="M300 30L287 87" stroke="#2d6226" stroke-width="2.1"/><path d="M300 30L361 58" stroke="#4f9a3c" stroke-width="4.3"/><path d="M300 30L358 94" stroke="#4f9a3c" stroke-width="5.0"/><path d="M300 30L344 46" stroke="#2d6226" stroke-width="4.0"/><path d="M300 30L220 85" stroke="#9ccf62" stroke-width="2.6"/><path d="M300 30L253 59" stroke="#9ccf62" stroke-width="2.0"/><path d="M300 30L307 113" stroke="#6db548" stroke-width="2.7"/><path d="M300 30L244 76" stroke="#2d6226" stroke-width="3.5"/><path d="M300 30L250 30" stroke="#9ccf62" stroke-width="4.7"/><path d="M300 30L392 56" stroke="#9ccf62" stroke-width="3.2"/><path d="M300 30L308 81" stroke="#4f9a3c" stroke-width="3.1"/><path d="M300 30L280 121" stroke="#3b7a2e" stroke-width="3.4"/><path d="M300 30L276 76" stroke="#9ccf62" stroke-width="4.6"/><path d="M300 30L223 87" stroke="#4f9a3c" stroke-width="2.6"/><path d="M300 30L206 61" stroke="#3b7a2e" stroke-width="3.6"/><path d="M300 30L253 66" stroke="#9ccf62" stroke-width="4.6"/><path d="M300 30L321 70" stroke="#86c455" stroke-width="3.0"/><path d="M300 30L314 85" stroke="#4f9a3c" stroke-width="2.7"/><path d="M470 60L514 11" stroke="#2d6226" stroke-width="2.5"/><path d="M470 60L426 135" stroke="#3b7a2e" stroke-width="3.4"/><path d="M470 60L564 60" stroke="#4f9a3c" stroke-width="4.8"/><path d="M470 60L373 65" stroke="#2d6226" stroke-width="4.3"/><path d="M470 60L402 87" stroke="#3b7a2e" stroke-width="3.6"/><path d="M470 60L511 -1" stroke="#1f4a1c" stroke-width="4.0"/><path d="M470 60L559 34" stroke="#3b7a2e" stroke-width="2.9"/><path d="M470 60L516 116" stroke="#1f4a1c" stroke-width="3.7"/><path d="M470 60L492 129" stroke="#2d6226" stroke-width="3.8"/><path d="M470 60L567 77" stroke="#4f9a3c" stroke-width="3.6"/><path d="M470 60L517 57" stroke="#2d6226" stroke-width="4.1"/><path d="M470 60L536 89" stroke="#4f9a3c" stroke-width="4.8"/><path d="M470 60L490 -1" stroke="#3b7a2e" stroke-width="3.4"/><path d="M470 60L516 107" stroke="#4f9a3c" stroke-width="3.6"/><path d="M470 60L521 101" stroke="#2d6226" stroke-width="4.8"/><path d="M470 60L530 123" stroke="#2d6226" stroke-width="2.1"/><path d="M470 60L493 94" stroke="#1f4a1c" stroke-width="3.0"/><path d="M470 60L423 121" stroke="#2d6226" stroke-width="3.5"/><path d="M470 60L391 15" stroke="#1f4a1c" stroke-width="4.2"/><path d="M470 60L442 -28" stroke="#2d6226" stroke-width="3.1"/><path d="M470 60L409 97" stroke="#3b7a2e" stroke-width="3.6"/><path d="M470 60L517 6" stroke="#3b7a2e" stroke-width="3.6"/><path d="M40 300L114 338" stroke="#2d6226" stroke-width="2.7"/><path d="M40 300L137 305" stroke="#2d6226" stroke-width="2.9"/><path d="M40 300L39 195" stroke="#2d6226" stroke-width="4.3"/><path d="M40 300L19 258" stroke="#2d6226" stroke-width="2.4"/><path d="M40 300L-12 257" stroke="#3b7a2e" stroke-width="4.5"/><path d="M40 300L77 212" stroke="#2d6226" stroke-width="2.6"/><path d="M40 300L129 264" stroke="#2d6226" stroke-width="2.6"/><path d="M40 300L142 282" stroke="#3b7a2e" stroke-width="2.3"/><path d="M40 300L101 230" stroke="#4f9a3c" stroke-width="5.0"/><path d="M40 300L128 338" stroke="#3b7a2e" stroke-width="2.3"/><path d="M40 300L-29 263" stroke="#4f9a3c" stroke-width="4.7"/><path d="M40 300L71 257" stroke="#2d6226" stroke-width="2.6"/><path d="M40 300L139 346" stroke="#4f9a3c" stroke-width="2.3"/><path d="M40 300L-49 241" stroke="#3b7a2e" stroke-width="2.2"/><path d="M40 300L-11 256" stroke="#3b7a2e" stroke-width="3.5"/><path d="M40 300L74 225" stroke="#2d6226" stroke-width="3.9"/><path d="M40 300L-7 274" stroke="#3b7a2e" stroke-width="3.4"/><path d="M40 300L108 303" stroke="#2d6226" stroke-width="3.8"/><path d="M90 430L23 410" stroke="#5a8a34" stroke-width="3.8"/><path d="M90 430L143 392" stroke="#2d6226" stroke-width="3.9"/><path d="M90 430L99 391" stroke="#2d6226" stroke-width="4.0"/><path d="M90 430L125 405" stroke="#3b7a2e" stroke-width="3.5"/><path d="M90 430L144 385" stroke="#5a8a34" stroke-width="2.3"/><path d="M90 430L61 381" stroke="#5a8a34" stroke-width="3.5"/><path d="M90 430L127 396" stroke="#2d6226" stroke-width="2.4"/><path d="M90 430L126 403" stroke="#3b7a2e" stroke-width="2.0"/><path d="M90 430L63 374" stroke="#2d6226" stroke-width="2.1"/><path d="M90 430L39 371" stroke="#5a8a34" stroke-width="2.7"/><path d="M90 430L118 379" stroke="#2d6226" stroke-width="2.2"/><path d="M90 430L93 375" stroke="#3b7a2e" stroke-width="3.4"/><path d="M90 430L148 376" stroke="#3b7a2e" stroke-width="2.2"/><path d="M90 430L51 416" stroke="#5a8a34" stroke-width="2.8"/></g><ellipse cx="163" cy="206" rx="52" ry="92" fill="url(#lf1)" transform="rotate(6 163 206)"/><path d="M168 118L158 296" stroke="#d3ecd0" stroke-width="2.500"/><path d="M245 105C320 90 430 150 497 232C440 236 400 215 360 196C320 176 280 150 245 105Z" fill="url(#lf2)"/><path d="M20 70C70 30 170 30 250 62C180 80 90 96 20 70Z" fill="#4fa044"/><path d="M180 62C230 20 300 8 330 30C290 60 230 80 180 62Z" fill="#6cb95a"/><ellipse cx="298" cy="404" rx="70" ry="60" fill="#8a4f22"/><ellipse cx="298" cy="396" rx="69" ry="57" fill="url(#tb)"/><path d="M325 236c8-22 44-24 56-4l10 50-22 56-50 10-6-40z" fill="#efeadd"/><ellipse cx="348" cy="205" rx="19" ry="17" fill="#2b1d15"/><path d="M300 330l40-18 6 50-30 30z" fill="#b86a7a"/><path d="M300 330l14-5 6 64-10 6z" fill="#f2e9e0" opacity=".7"/></svg><div class="t" style="left:36.0px;top:588.0px;font-size:56.0px;line-height:64.4px;font-family:'Liberation Serif',serif;color:#faf3d6;font-weight:700;letter-spacing:-.5px">Document Title</div><div class="t" style="left:36.0px;top:652.0px;font-size:56.0px;line-height:64.4px;font-family:'Liberation Serif',serif;color:#faf3d6;letter-spacing:-.3px">Document Subtitle</div><div class="t" style="left:36.0px;top:738.0px;font-size:17.0px;line-height:19.5px;font-family:'Liberation Serif',serif;color:#faf3d6;font-weight:700">Author Name</div><div class="t" style="left:286.0px;top:738.0px;font-size:17.0px;line-height:19.5px;font-family:'Liberation Serif',serif;color:#faf3d6;font-weight:700">Day, Month, Year</div><div class="t" style="left:36.0px;top:831.0px;font-size:11.4px;line-height:13.1px;font-family:'Liberation Serif',serif;color:#faf3d6;font-weight:700">Document Title</div><div class="t" style="left:576.0px;top:831.0px;font-size:11.4px;line-height:13.1px;font-family:'Liberation Serif',serif;color:#faf3d6;">1</div></div><div class="bdg" style="background:rgba(50,44,52,.85);right:10px;top:9.500px"><svg viewBox="0 0 34 34"><path d="M17.900 12.300L8.400 14.700C6.600 15.200 6.300 16.800 7.700 17.900L19.800 26.400C21.800 27.800 24.300 26.700 24.200 24.500C24.100 22.500 21.800 21.600 20.200 22.900"/><path d="M14.300 10.900C14.500 8.200 15.600 6.400 17.100 6.400C18.500 6.400 19.200 7.800 19.800 9.600L22.400 16.700C23.300 19 26.200 19.100 27.100 16.700C27.900 14.400 26 12.400 23.600 13.200"/><path d="M10.600 20.600C8.900 22.200 8.600 25.400 10.500 26.900C12.300 28.200 14.600 27 14.700 24.800"/><path d="M11.900 17L13.500 15.300"/></svg></div></div>
<div class="lb" style="left:1536.5px;top:407px;-webkit-mask-image:linear-gradient(90deg,#000 0,#000 72%,rgba(0,0,0,.35) 100%)">Scrapbook Dark<br>Proposal</div>
<div class="abs" style="left:1719px;top:203.500px;width:51px;height:84px;background:rgba(232,229,228,.93);border-radius:11px 0 0 11px"><svg class="abs" style="left:0;top:0" width="51" height="84" viewBox="0 0 51 84" fill="none" stroke="#3a3a3a" stroke-width="1.700" stroke-linecap="round" stroke-linejoin="round"><path d="M13 12L39 42L13 72"/></svg></div>
</div>
<div class="sec" style="top:982px;height:520px"><h2 style="top:25px">Education</h2>
<div class="th" style="left:81px;top:98px;width:226px;height:292px;"><div class="abs" style="left:0;top:0;width:678px;height:876px;background:#fff;transform:scale(.333333);transform-origin:0 0"><div class="t" style="left:41.0px;top:38.0px;font-size:25.5px;line-height:29.3px;font-weight:700;color:#3a3fa0;letter-spacing:-.6px">Weekly Planner</div><div class="t" style="left:41.0px;top:69.0px;font-size:26.5px;line-height:30.5px;color:#111;letter-spacing:-.5px">00/00–00/00</div><div class="t" style="left:41.0px;top:176.0px;font-size:10.4px;line-height:12.0px;font-weight:700;color:#111;letter-spacing:.3px">Monday</div><div class="t" style="left:41.0px;top:193.0px;font-size:10.0px;line-height:11.5px;color:#333;letter-spacing:.3px">00/00</div><div class="abs" style="left:41px;top:244px;width:96px;height:259px;background:#dcdffa;border:2.200px solid #3c4190;border-radius:7px"></div><div class="p" style="left:50.0px;top:250.0px;width:90.0px;font-size:11.20px;line-height:18.40px;color:#222;white-space:nowrap;letter-spacing:.2px">&nbsp;To get<br>started, just<br>tap or click<br>this<br>placeholder<br>text and<br>begin typing.</div><div class="t" style="left:142.0px;top:176.0px;font-size:10.4px;line-height:12.0px;font-weight:700;color:#111;letter-spacing:.3px">Tuesday</div><div class="t" style="left:142.0px;top:193.0px;font-size:10.0px;line-height:11.5px;color:#333;letter-spacing:.3px">00/00</div><div class="abs" style="left:142px;top:244px;width:96px;height:259px;background:#dcdffa;border:2.200px solid #3c4190;border-radius:7px"></div><div class="p" style="left:151.0px;top:250.0px;width:90.0px;font-size:11.20px;line-height:18.40px;color:#222;white-space:nowrap;letter-spacing:.2px">&nbsp;To get<br>started, just<br>tap or click<br>this<br>placeholder<br>text and begin<br>typing.</div><div class="t" style="left:243.0px;top:176.0px;font-size:10.4px;line-height:12.0px;font-weight:700;color:#111;letter-spacing:.3px">Wednesday</div><div class="t" style="left:243.0px;top:193.0px;font-size:10.0px;line-height:11.5px;color:#333;letter-spacing:.3px">00/00</div><div class="abs" style="left:243px;top:244px;width:96px;height:259px;background:#dcdffa;border:2.200px solid #3c4190;border-radius:7px"></div><div class="p" style="left:252.0px;top:250.0px;width:90.0px;font-size:11.20px;line-height:18.40px;color:#222;white-space:nowrap;letter-spacing:.2px">&nbsp;To get<br>started, just<br>tap or click<br>this<br>placeholder<br>text and begin<br>typing.</div><div class="t" style="left:344.0px;top:176.0px;font-size:10.4px;line-height:12.0px;font-weight:700;color:#111;letter-spacing:.3px">Thursday</div><div class="t" style="left:344.0px;top:193.0px;font-size:10.0px;line-height:11.5px;color:#333;letter-spacing:.3px">00/00</div><div class="abs" style="left:344px;top:244px;width:96px;height:259px;background:#dcdffa;border:2.200px solid #3c4190;border-radius:7px"></div><div class="p" style="left:353.0px;top:250.0px;width:90.0px;font-size:11.20px;line-height:18.40px;color:#222;white-space:nowrap;letter-spacing:.2px">&nbsp;To get<br>started, just<br>tap or click<br>this<br>placeholder<br>text and begin<br>typing.</div><div class="t" style="left:445.0px;top:176.0px;font-size:10.4px;line-height:12.0px;font-weight:700;color:#111;letter-spacing:.3px">Friday</div><div class="t" style="left:445.0px;top:193.0px;font-size:10.0px;line-height:11.5px;color:#333;letter-spacing:.3px">00/00</div><div class="abs" style="left:445px;top:244px;width:96px;height:259px;background:#dcdffa;border:2.200px solid #3c4190;border-radius:7px"></div><div class="p" style="left:454.0px;top:250.0px;width:90.0px;font-size:11.20px;line-height:18.40px;color:#222;white-space:nowrap;letter-spacing:.2px">&nbsp;To get<br>started, just<br>tap or click<br>this<br>placeholder<br>text and begin<br>typing.</div><div class="t" style="left:545.0px;top:176.0px;font-size:10.4px;line-height:12.0px;font-weight:700;color:#111;letter-spacing:.3px">Weekend</div><div class="t" style="left:545.0px;top:193.0px;font-size:10.0px;line-height:11.5px;color:#333;letter-spacing:.3px">00/00</div><div class="abs" style="left:545px;top:244px;width:96px;height:259px;background:#dcdffa;border:2.200px solid #3c4190;border-radius:7px"></div><div class="p" style="left:554.0px;top:250.0px;width:90.0px;font-size:11.20px;line-height:18.40px;color:#222;white-space:nowrap;letter-spacing:.2px">&nbsp;To get<br>started, just<br>tap or click<br>this<br>placeholder<br>text and begin<br>typing.</div></div><div class="bdg" style="right:10px;top:9.500px"><svg viewBox="0 0 34 34"><path d="M17.900 12.300L8.400 14.700C6.600 15.200 6.300 16.800 7.700 17.900L19.800 26.400C21.800 27.800 24.300 26.700 24.200 24.500C24.100 22.500 21.800 21.600 20.200 22.900"/><path d="M14.300 10.900C14.500 8.200 15.600 6.400 17.100 6.400C18.500 6.400 19.200 7.800 19.800 9.600L22.400 16.700C23.300 19 26.200 19.100 27.100 16.700C27.900 14.400 26 12.400 23.600 13.200"/><path d="M10.600 20.600C8.900 22.200 8.600 25.400 10.500 26.900C12.300 28.200 14.600 27 14.700 24.800"/><path d="M11.900 17L13.500 15.300"/></svg></div></div>
<div class="th" style="left:347px;top:98px;width:226px;height:292px;"><div class="abs" style="left:0;top:0;width:678px;height:876px;background:#000;transform:scale(.333333);transform-origin:0 0"><div class="t" style="left:35.0px;top:34.0px;font-size:16.5px;line-height:19.0px;font-family:'Liberation Mono',monospace;font-weight:700;color:#f2f2f2">Document Title</div><div class="p" style="left:338.0px;top:34.0px;width:280.0px;font-size:12.80px;line-height:15.30px;font-family:'Liberation Mono',monospace;color:#d8d8d8;white-space:nowrap">To get started, just tap or<br>click this placeholder text<br>and begin typing.</div><div class="abs" style="left:40px;top:174px;width:603px;height:264px;background:#3d3a0b;border:1.200px solid #8a7c3c"></div><div class="t" style="left:40.0px;top:180.0px;font-size:13.4px;line-height:15.4px;font-family:'Liberation Mono',monospace;width:603px;text-align:center;color:#d9d4a8">Main Idea</div><div class="abs" style="left:40px;top:443px;width:197px;height:200px;background:#15314f;border:1px solid #274a6c"></div><div class="p" style="left:40.0px;top:489.0px;width:197.0px;font-size:13.20px;line-height:16.50px;font-family:'Liberation Mono',monospace;text-align:center;color:#b9c6d6;white-space:nowrap">Supporting Idea<br>To get started, just<br>tap or click this</div><div class="abs" style="left:242px;top:443px;width:194px;height:200px;background:#15314f;border:1px solid #274a6c"></div><div class="p" style="left:242.0px;top:489.0px;width:194.0px;font-size:13.20px;line-height:16.50px;font-family:'Liberation Mono',monospace;text-align:center;color:#b9c6d6;white-space:nowrap">Supporting Idea<br>To get started, just<br>tap or click this</div><div class="abs" style="left:442px;top:443px;width:201px;height:200px;background:#15314f;border:1px solid #274a6c"></div><div class="p" style="left:442.0px;top:489.0px;width:201.0px;font-size:13.20px;line-height:16.50px;font-family:'Liberation Mono',monospace;text-align:center;color:#b9c6d6;white-space:nowrap">Supporting Idea<br>To get started, just<br>tap or click this</div></div><div class="bdg" style="background:transparent;right:10px;top:9.500px"><svg viewBox="0 0 34 34"><path d="M17.900 12.300L8.400 14.700C6.600 15.200 6.300 16.800 7.700 17.900L19.800 26.400C21.800 27.800 24.300 26.700 24.200 24.500C24.100 22.500 21.800 21.600 20.200 22.900"/><path d="M14.300 10.900C14.500 8.200 15.600 6.400 17.100 6.400C18.500 6.400 19.200 7.800 19.800 9.600L22.400 16.700C23.300 19 26.200 19.100 27.100 16.700C27.900 14.400 26 12.400 23.600 13.200"/><path d="M10.600 20.600C8.900 22.200 8.600 25.400 10.500 26.900C12.300 28.200 14.600 27 14.700 24.800"/><path d="M11.900 17L13.500 15.300"/></svg></div></div>
<div class="th" style="left:613px;top:98px;width:207px;height:292px;"><div class="abs" style="left:0;top:0;width:621px;height:876px;background:#fff;transform:scale(.333333);transform-origin:0 0"><div class="abs" style="left:28px;top:30px;width:563px;height:77px;background:radial-gradient(ellipse 120px 60px at 60% 40%,#3a4556 0,rgba(58,69,86,0) 100%),radial-gradient(ellipse 90px 50px at 85% 70%,#2c3646 0,rgba(44,54,70,0) 100%),linear-gradient(100deg,#0f151f,#1c2533 50%,#10161f)"></div><div class="t" style="left:41.0px;top:50.0px;font-size:36.0px;line-height:41.4px;font-family:'Liberation Serif',serif;color:#fff;letter-spacing:-.4px">Lesson Plan</div><div class="p" style="left:28.0px;top:126.0px;width:300.0px;font-size:9.40px;line-height:11.50px;color:#333;white-space:nowrap">To get started, just tap or click this<br>placeholder text and begin typing. You can<br>view and edit this document on your Mac, iPad,<br>iPhone, or on iCloud.com.</div><div class="abs" style="left:28px;top:198px;width:109px;height:73px;background:radial-gradient(circle at 30% 60%,#f2c4b4 0 12%,rgba(0,0,0,0) 13%),radial-gradient(circle at 70% 30%,#e9b09c 0 10%,rgba(0,0,0,0) 11%),radial-gradient(circle at 55% 80%,#f0c0ae 0 9%,rgba(0,0,0,0) 10%),linear-gradient(135deg,#8e3c1c,#a24a24)"></div><div class="t" style="left:28.0px;top:275.0px;font-size:9.6px;line-height:11.0px;font-weight:700;color:#222">Heading</div><div class="p" style="left:28.0px;top:289.0px;width:110.0px;font-size:9.50px;line-height:11.50px;color:#333;white-space:nowrap">To get started, just tap<br>or click this placeholder<br>text and begin typing.</div><div class="abs" style="left:141px;top:198px;width:108px;height:73px;background:radial-gradient(circle at 35% 40%,#c9cba6 0 14%,rgba(0,0,0,0) 15%),radial-gradient(circle at 70% 70%,#b7bb90 0 12%,rgba(0,0,0,0) 13%),linear-gradient(135deg,#6f7a4c,#8a9262)"></div><div class="t" style="left:141.0px;top:275.0px;font-size:9.6px;line-height:11.0px;font-weight:700;color:#222">Heading</div><div class="p" style="left:141.0px;top:289.0px;width:110.0px;font-size:9.50px;line-height:11.50px;color:#333;white-space:nowrap">To get started, just tap<br>or click this placeholder<br>text and begin typing.</div><div class="abs" style="left:254px;top:198px;width:108px;height:73px;background:radial-gradient(circle at 40% 30%,#f3d06a 0 12%,rgba(0,0,0,0) 13%),radial-gradient(circle at 65% 70%,#efc654 0 12%,rgba(0,0,0,0) 13%),linear-gradient(135deg,#b87d12,#d49c22)"></div><div class="t" style="left:254.0px;top:275.0px;font-size:9.6px;line-height:11.0px;font-weight:700;color:#222">Heading</div><div class="p" style="left:254.0px;top:289.0px;width:110.0px;font-size:9.50px;line-height:11.50px;color:#333;white-space:nowrap">To get started, just tap<br>or click this placeholder<br>text and begin typing.</div><div class="abs" style="left:366px;top:198px;width:108px;height:73px;background:linear-gradient(135deg,#13222f,#1c3345 50%,#122230)"></div><div class="t" style="left:366.0px;top:275.0px;font-size:9.6px;line-height:11.0px;font-weight:700;color:#222">Heading</div><div class="p" style="left:366.0px;top:289.0px;width:110.0px;font-size:9.50px;line-height:11.50px;color:#333;white-space:nowrap">To get started, just tap<br>or click this placeholder<br>text and begin typing.</div><div class="abs" style="left:479px;top:198px;width:112px;height:73px;background:radial-gradient(ellipse at 30% 70%,#f3c3d6 0 20%,rgba(0,0,0,0) 21%),radial-gradient(ellipse at 75% 35%,#e9a7c3 0 16%,rgba(0,0,0,0) 17%),linear-gradient(135deg,#b24a7c,#d27aa2)"></div><div class="t" style="left:479.0px;top:275.0px;font-size:9.6px;line-height:11.0px;font-weight:700;color:#222">Heading</div><div class="p" style="left:479.0px;top:289.0px;width:110.0px;font-size:9.50px;line-height:11.50px;color:#333;white-space:nowrap">To get started, just tap<br>or click this placeholder<br>text and begin typing.</div><div class="abs" style="left:28px;top:358px;width:563px;height:26px;background:#16324a"></div><div class="abs" style="left:28px;top:462px;width:563px;height:120px;background:#f3f1eb"></div><div class="t" style="left:37.0px;top:364.0px;font-size:10.4px;line-height:12.0px;font-weight:700;color:#fff">Day</div><div class="t" style="left:150.0px;top:364.0px;font-size:10.4px;line-height:12.0px;font-weight:700;color:#fff">Subject</div><div class="t" style="left:263.0px;top:364.0px;font-size:10.4px;line-height:12.0px;font-weight:700;color:#fff">Subject</div><div class="t" style="left:375.0px;top:364.0px;font-size:10.4px;line-height:12.0px;font-weight:700;color:#fff">Subject</div><div class="t" style="left:488.0px;top:364.0px;font-size:10.4px;line-height:12.0px;font-weight:700;color:#fff">Subject</div><div class="abs" style="left:140px;top:358px;width:2px;height:230px;background:#2a2a2a"></div><div class="abs" style="left:253px;top:358px;width:2px;height:230px;background:#2a2a2a"></div><div class="abs" style="left:365px;top:358px;width:2px;height:230px;background:#2a2a2a"></div><div class="abs" style="left:478px;top:358px;width:2px;height:230px;background:#2a2a2a"></div><div class="abs" style="left:28px;top:461px;width:563px;height:2px;background:#2a2a2a"></div><div class="t" style="left:37.0px;top:391.0px;font-size:10.4px;line-height:12.0px;font-weight:700;color:#222">Monday</div><div class="t" style="left:37.0px;top:472.0px;font-size:10.4px;line-height:12.0px;font-weight:700;color:#222">Tuesday</div></div><div class="bdg" style="right:10px;top:9.500px"><svg viewBox="0 0 34 34"><path d="M17.900 12.300L8.400 14.700C6.600 15.200 6.300 16.800 7.700 17.900L19.800 26.400C21.800 27.800 24.300 26.700 24.200 24.500C24.100 22.500 21.800 21.600 20.200 22.900"/><path d="M14.300 10.900C14.500 8.200 15.600 6.400 17.100 6.400C18.500 6.400 19.200 7.800 19.800 9.600L22.400 16.700C23.300 19 26.200 19.100 27.100 16.700C27.900 14.400 26 12.400 23.600 13.200"/><path d="M10.600 20.600C8.900 22.200 8.600 25.400 10.500 26.900C12.300 28.200 14.600 27 14.700 24.800"/><path d="M11.900 17L13.500 15.300"/></svg></div></div>
<div class="th" style="left:860px;top:98px;width:226px;height:292px;"><div class="abs" style="left:0;top:0;width:678px;height:876px;background:#fff;transform:scale(.333333);transform-origin:0 0"><div class="abs" style="left:26px;top:25px;width:623px;height:106px;background:#e1720c"></div><div class="t" style="left:39.0px;top:35.0px;font-size:27.6px;line-height:31.7px;font-weight:700;color:#fff">Document Title</div><div class="p" style="left:342.0px;top:39.0px;width:300.0px;font-size:10.80px;line-height:14.00px;color:#ffd9a6;white-space:nowrap">To get started, just tap or click this placeholder text and<br>begin typing.</div><div class="abs" style="left:26px;top:142px;width:134px;height:110px;background:#fde8c8"></div><div class="abs" style="left:173px;top:142px;width:476px;height:110px;background:#fde8c8"></div><div class="t" style="left:39.0px;top:156.0px;font-size:11.5px;line-height:13.2px;font-weight:700;color:#222">Subject</div><div class="t" style="left:187.0px;top:156.0px;font-size:11.0px;line-height:12.6px;color:#333">•</div><div class="t" style="left:198.0px;top:156.0px;font-size:11.8px;line-height:13.6px;color:#333">List item</div><div class="t" style="left:187.0px;top:170.6px;font-size:11.0px;line-height:12.6px;color:#333">•</div><div class="t" style="left:198.0px;top:170.6px;font-size:11.8px;line-height:13.6px;color:#333">List item</div><div class="t" style="left:187.0px;top:185.2px;font-size:11.0px;line-height:12.6px;color:#333">•</div><div class="t" style="left:198.0px;top:185.2px;font-size:11.8px;line-height:13.6px;color:#333">List item</div><div class="t" style="left:187.0px;top:199.8px;font-size:11.0px;line-height:12.6px;color:#333">•</div><div class="t" style="left:198.0px;top:199.8px;font-size:11.8px;line-height:13.6px;color:#333">List item</div><div class="t" style="left:187.0px;top:214.4px;font-size:11.0px;line-height:12.6px;color:#333">•</div><div class="t" style="left:198.0px;top:214.4px;font-size:11.8px;line-height:13.6px;color:#333">List item</div><div class="abs" style="left:26px;top:265px;width:134px;height:111px;background:#fde8c8"></div><div class="abs" style="left:173px;top:265px;width:476px;height:111px;background:#fde8c8"></div><div class="t" style="left:39.0px;top:279.0px;font-size:11.5px;line-height:13.2px;font-weight:700;color:#222">Subject</div><div class="t" style="left:187.0px;top:279.0px;font-size:11.0px;line-height:12.6px;color:#333">•</div><div class="t" style="left:198.0px;top:279.0px;font-size:11.8px;line-height:13.6px;color:#333">List item</div><div class="t" style="left:187.0px;top:293.6px;font-size:11.0px;line-height:12.6px;color:#333">•</div><div class="t" style="left:198.0px;top:293.6px;font-size:11.8px;line-height:13.6px;color:#333">List item</div><div class="t" style="left:187.0px;top:308.2px;font-size:11.0px;line-height:12.6px;color:#333">•</div><div class="t" style="left:198.0px;top:308.2px;font-size:11.8px;line-height:13.6px;color:#333">List item</div><div class="t" style="left:187.0px;top:322.8px;font-size:11.0px;line-height:12.6px;color:#333">•</div><div class="t" style="left:198.0px;top:322.8px;font-size:11.8px;line-height:13.6px;color:#333">List item</div><div class="t" style="left:187.0px;top:337.4px;font-size:11.0px;line-height:12.6px;color:#333">•</div><div class="t" style="left:198.0px;top:337.4px;font-size:11.8px;line-height:13.6px;color:#333">List item</div><div class="abs" style="left:26px;top:388px;width:134px;height:107px;background:#fde8c8"></div><div class="abs" style="left:173px;top:388px;width:476px;height:107px;background:#fde8c8"></div><div class="t" style="left:39.0px;top:402.0px;font-size:11.5px;line-height:13.2px;font-weight:700;color:#222">Subject</div><div class="t" style="left:187.0px;top:402.0px;font-size:11.0px;line-height:12.6px;color:#333">•</div><div class="t" style="left:198.0px;top:402.0px;font-size:11.8px;line-height:13.6px;color:#333">List item</div><div class="t" style="left:187.0px;top:416.6px;font-size:11.0px;line-height:12.6px;color:#333">•</div><div class="t" style="left:198.0px;top:416.6px;font-size:11.8px;line-height:13.6px;color:#333">List item</div><div class="t" style="left:187.0px;top:431.2px;font-size:11.0px;line-height:12.6px;color:#333">•</div><div class="t" style="left:198.0px;top:431.2px;font-size:11.8px;line-height:13.6px;color:#333">List item</div><div class="t" style="left:187.0px;top:445.8px;font-size:11.0px;line-height:12.6px;color:#333">•</div><div class="t" style="left:198.0px;top:445.8px;font-size:11.8px;line-height:13.6px;color:#333">List item</div><div class="t" style="left:187.0px;top:460.4px;font-size:11.0px;line-height:12.6px;color:#333">•</div><div class="t" style="left:198.0px;top:460.4px;font-size:11.8px;line-height:13.6px;color:#333">List item</div><div class="abs" style="left:26px;top:507px;width:134px;height:110px;background:#fde8c8"></div><div class="abs" style="left:173px;top:507px;width:476px;height:110px;background:#fde8c8"></div><div class="t" style="left:39.0px;top:521.0px;font-size:11.5px;line-height:13.2px;font-weight:700;color:#222">Subject</div><div class="t" style="left:187.0px;top:521.0px;font-size:11.0px;line-height:12.6px;color:#333">•</div><div class="t" style="left:198.0px;top:521.0px;font-size:11.8px;line-height:13.6px;color:#333">List item</div><div class="t" style="left:187.0px;top:535.6px;font-size:11.0px;line-height:12.6px;color:#333">•</div><div class="t" style="left:198.0px;top:535.6px;font-size:11.8px;line-height:13.6px;color:#333">List item</div><div class="t" style="left:187.0px;top:550.2px;font-size:11.0px;line-height:12.6px;color:#333">•</div><div class="t" style="left:198.0px;top:550.2px;font-size:11.8px;line-height:13.6px;color:#333">List item</div><div class="t" style="left:187.0px;top:564.8px;font-size:11.0px;line-height:12.6px;color:#333">•</div><div class="t" style="left:198.0px;top:564.8px;font-size:11.8px;line-height:13.6px;color:#333">List item</div><div class="t" style="left:187.0px;top:579.4px;font-size:11.0px;line-height:12.6px;color:#333">•</div><div class="t" style="left:198.0px;top:579.4px;font-size:11.8px;line-height:13.6px;color:#333">List item</div></div><div class="bdg" style="background:#2e1a0c;right:10px;top:9.500px"><svg viewBox="0 0 34 34"><path d="M17.900 12.300L8.400 14.700C6.600 15.200 6.300 16.800 7.700 17.900L19.800 26.400C21.800 27.800 24.300 26.700 24.200 24.500C24.100 22.500 21.800 21.600 20.200 22.900"/><path d="M14.300 10.900C14.500 8.200 15.600 6.400 17.100 6.400C18.500 6.400 19.200 7.800 19.800 9.600L22.400 16.700C23.300 19 26.200 19.100 27.100 16.700C27.900 14.400 26 12.400 23.600 13.200"/><path d="M10.600 20.600C8.900 22.200 8.600 25.400 10.500 26.900C12.300 28.200 14.600 27 14.700 24.800"/><path d="M11.900 17L13.500 15.300"/></svg></div></div>
<div class="th" style="left:1126px;top:98px;width:226px;height:292px;"><div class="abs" style="left:0;top:0;width:678px;height:876px;background:#fff;transform:scale(.333333);transform-origin:0 0"><div class="abs" style="left:37px;top:38px;width:603px;height:1.500px;background:#222"></div><div class="t" style="left:36.0px;top:38.0px;font-size:72.0px;line-height:82.8px;font-weight:700;color:#0a0a0a;transform:scaleX(.5);line-height:72px;letter-spacing:0;-webkit-text-stroke:2.500px #0a0a0a">Class Schedule</div><div class="abs" style="left:37px;top:152px;width:603px;height:1.200px;background:#999"></div><div class="t" style="left:37.0px;top:155.0px;font-size:12.2px;line-height:14.0px;font-family:'Liberation Serif',serif;font-weight:700;color:#222">July 29, 2025</div><div class="t" style="left:165.0px;top:155.0px;font-size:12.2px;line-height:14.0px;font-family:'Liberation Serif',serif;color:#333">To get started, just tap or click this placeholder text and begin typing.</div><div class="abs" style="left:36px;top:238px;width:102px;height:26px;background:#d9d5c9"></div><div class="abs" style="left:36px;top:264px;width:102px;height:330px;background:#fbfaf8"></div><div class="t" style="left:43.0px;top:244.0px;font-size:11.8px;line-height:13.6px;font-family:'Liberation Serif',serif;font-weight:700;color:#222">Time</div><div class="abs" style="left:138px;top:238px;width:98px;height:26px;background:#d9a542"></div><div class="abs" style="left:138px;top:264px;width:98px;height:330px;background:#fbf3e6"></div><div class="t" style="left:145.0px;top:244.0px;font-size:11.8px;line-height:13.6px;font-family:'Liberation Serif',serif;font-weight:700;color:#222">Monday</div><div class="abs" style="left:236px;top:238px;width:100px;height:26px;background:#b4cf9b"></div><div class="abs" style="left:236px;top:264px;width:100px;height:330px;background:#f4f8ef"></div><div class="t" style="left:243.0px;top:244.0px;font-size:11.8px;line-height:13.6px;font-family:'Liberation Serif',serif;font-weight:700;color:#222">Tuesday</div><div class="abs" style="left:336px;top:238px;width:102px;height:26px;background:#d58b9b"></div><div class="abs" style="left:336px;top:264px;width:102px;height:330px;background:#faf0f2"></div><div class="t" style="left:343.0px;top:244.0px;font-size:11.8px;line-height:13.6px;font-family:'Liberation Serif',serif;font-weight:700;color:#222">Wednesday</div><div class="abs" style="left:438px;top:238px;width:98px;height:26px;background:#90a5d1"></div><div class="abs" style="left:438px;top:264px;width:98px;height:330px;background:#f1f3f9"></div><div class="t" style="left:445.0px;top:244.0px;font-size:11.8px;line-height:13.6px;font-family:'Liberation Serif',serif;font-weight:700;color:#222">Thursday</div><div class="abs" style="left:536px;top:238px;width:101px;height:26px;background:#a89bb1"></div><div class="abs" style="left:536px;top:264px;width:101px;height:330px;background:#f5f3f6"></div><div class="t" style="left:543.0px;top:244.0px;font-size:11.8px;line-height:13.6px;font-family:'Liberation Serif',serif;font-weight:700;color:#222">Friday</div><div class="abs" style="left:35px;top:238px;width:1.600px;height:360px;background:#111"></div><div class="abs" style="left:137px;top:238px;width:1.600px;height:360px;background:#111"></div><div class="abs" style="left:235px;top:238px;width:1.600px;height:360px;background:#111"></div><div class="abs" style="left:335px;top:238px;width:1.600px;height:360px;background:#111"></div><div class="abs" style="left:437px;top:238px;width:1.600px;height:360px;background:#111"></div><div class="abs" style="left:535px;top:238px;width:1.600px;height:360px;background:#111"></div><div class="abs" style="left:636px;top:238px;width:1.600px;height:360px;background:#111"></div><div class="abs" style="left:36px;top:237px;width:602px;height:1.600px;background:#111"></div><div class="abs" style="left:36px;top:263px;width:602px;height:1.600px;background:#111"></div><div class="abs" style="left:36px;top:326px;width:602px;height:1.600px;background:#111"></div><div class="abs" style="left:36px;top:391px;width:602px;height:1.600px;background:#111"></div><div class="abs" style="left:36px;top:455px;width:602px;height:1.600px;background:#111"></div><div class="abs" style="left:36px;top:518px;width:602px;height:1.600px;background:#111"></div><div class="abs" style="left:36px;top:582px;width:602px;height:1.600px;background:#111"></div><div class="t" style="left:43.0px;top:269.0px;font-size:11.2px;line-height:12.9px;font-family:'Liberation Serif',serif;font-weight:700;color:#222">7:00 AM</div><div class="t" style="left:43.0px;top:332.0px;font-size:11.2px;line-height:12.9px;font-family:'Liberation Serif',serif;font-weight:700;color:#222">8:00 AM</div><div class="t" style="left:43.0px;top:397.0px;font-size:11.2px;line-height:12.9px;font-family:'Liberation Serif',serif;font-weight:700;color:#222">9:00 AM</div><div class="t" style="left:43.0px;top:461.0px;font-size:11.2px;line-height:12.9px;font-family:'Liberation Serif',serif;font-weight:700;color:#222">10:00 AM</div><div class="t" style="left:43.0px;top:524.0px;font-size:11.2px;line-height:12.9px;font-family:'Liberation Serif',serif;font-weight:700;color:#222">11:00 AM</div></div><div class="bdg" style="right:10px;top:9.500px"><svg viewBox="0 0 34 34"><path d="M17.900 12.300L8.400 14.700C6.600 15.200 6.300 16.800 7.700 17.900L19.800 26.400C21.800 27.800 24.300 26.700 24.200 24.500C24.100 22.500 21.800 21.600 20.200 22.900"/><path d="M14.300 10.900C14.500 8.200 15.600 6.400 17.100 6.400C18.500 6.400 19.200 7.800 19.800 9.600L22.400 16.700C23.300 19 26.200 19.100 27.100 16.700C27.900 14.400 26 12.400 23.600 13.200"/><path d="M10.600 20.600C8.900 22.200 8.600 25.400 10.500 26.900C12.300 28.200 14.600 27 14.700 24.800"/><path d="M11.900 17L13.500 15.300"/></svg></div></div>
<div class="th" style="left:1392px;top:98px;width:226px;height:292px;"><div class="abs" style="left:0;top:0;width:678px;height:876px;background:#fff;transform:scale(.333333);transform-origin:0 0"><div class="abs" style="left:27px;top:26px;width:626px;height:104px;background:#0b9df6"></div><div class="t" style="left:42.0px;top:37.0px;font-size:27.4px;line-height:31.5px;font-weight:700;color:#fff">Document Title</div><div class="p" style="left:344.0px;top:39.0px;width:300.0px;font-size:10.80px;line-height:14.00px;color:#d8efff;white-space:nowrap">To get started, just tap or click this placeholder text and<br>begin typing.</div><div class="abs" style="left:27px;top:151px;width:626px;height:261px;background:#cfe6f7"></div><div class="t" style="left:37.0px;top:162.0px;font-size:11.5px;line-height:13.2px;font-weight:700;color:#1a1a1a">Main Idea</div><div class="abs" style="left:28px;top:432px;width:195px;height:200px;background:#cfe6f7"></div><div class="t" style="left:38.0px;top:445.0px;font-size:11.5px;line-height:13.2px;font-weight:700;color:#1a1a1a">Supporting Idea</div><div class="abs" style="left:243px;top:432px;width:196px;height:200px;background:#cfe6f7"></div><div class="t" style="left:253.0px;top:445.0px;font-size:11.5px;line-height:13.2px;font-weight:700;color:#1a1a1a">Supporting Idea</div><div class="abs" style="left:458px;top:432px;width:195px;height:200px;background:#cfe6f7"></div><div class="t" style="left:468.0px;top:445.0px;font-size:11.5px;line-height:13.2px;font-weight:700;color:#1a1a1a">Supporting Idea</div></div><div class="bdg" style="background:#10233a;right:10px;top:9.500px"><svg viewBox="0 0 34 34"><path d="M17.900 12.300L8.400 14.700C6.600 15.200 6.300 16.800 7.700 17.900L19.800 26.400C21.800 27.800 24.300 26.700 24.200 24.500C24.100 22.500 21.800 21.600 20.200 22.900"/><path d="M14.300 10.900C14.500 8.200 15.600 6.400 17.100 6.400C18.500 6.400 19.200 7.800 19.800 9.600L22.400 16.700C23.300 19 26.200 19.100 27.100 16.700C27.900 14.400 26 12.400 23.600 13.200"/><path d="M10.600 20.600C8.900 22.200 8.600 25.400 10.500 26.900C12.300 28.200 14.600 27 14.700 24.800"/><path d="M11.900 17L13.500 15.300"/></svg></div></div>
<div class="th" style="left:1658px;top:98px;width:226px;height:292px;-webkit-mask-image:linear-gradient(90deg,#000 0,#000 28%,rgba(0,0,0,.06) 52%,rgba(0,0,0,0) 60%);box-shadow:none"><div class="abs" style="left:0;top:0;width:678px;height:876px;background:#fff;transform:scale(.333333);transform-origin:0 0"><div class="t" style="left:36.0px;top:28.0px;font-size:23.2px;line-height:26.7px;font-family:'Liberation Serif',serif;font-weight:700;color:#2c6b2f">Lesson Plan</div><div class="t" style="left:36.0px;top:57.0px;font-size:23.5px;line-height:27.0px;font-family:'Liberation Serif',serif;font-weight:700;color:#111">10/6/25</div><div class="t" style="left:31.0px;top:115.0px;font-size:10.6px;line-height:12.2px;font-family:'Liberation Serif',serif;font-weight:700;color:#222">Heading</div><div class="abs" style="left:31px;top:140px;width:85px;height:78px;background:#f3f2f0"></div><div class="abs" style="left:51px;top:158px;width:45px;height:42px;background:#c8533e;border-radius:5px"></div><div class="p" style="left:31.0px;top:231.0px;width:90.0px;font-size:10.40px;line-height:15.00px;font-family:'Liberation Serif',serif;font-weight:700;color:#333;white-space:nowrap">Drag your photos<br>onto any image.</div><div class="t" style="left:125.0px;top:115.0px;font-size:10.6px;line-height:12.2px;font-family:'Liberation Serif',serif;font-weight:700;color:#222">Heading</div><div class="abs" style="left:125px;top:140px;width:85px;height:78px;background:#f3f2f0"></div><div class="abs" style="left:145px;top:158px;width:45px;height:42px;background:#4fa84a;border-radius:5px"></div><div class="p" style="left:125.0px;top:231.0px;width:90.0px;font-size:10.40px;line-height:15.00px;font-family:'Liberation Serif',serif;font-weight:700;color:#333;white-space:nowrap">Drag your photos<br>onto any image.</div><div class="t" style="left:219.0px;top:115.0px;font-size:10.6px;line-height:12.2px;font-family:'Liberation Serif',serif;font-weight:700;color:#222">Heading</div><div class="abs" style="left:219px;top:140px;width:85px;height:78px;background:#f3f2f0"></div><div class="abs" style="left:239px;top:158px;width:45px;height:42px;background:#e88b86;border-radius:5px"></div><div class="p" style="left:219.0px;top:231.0px;width:90.0px;font-size:10.40px;line-height:15.00px;font-family:'Liberation Serif',serif;font-weight:700;color:#333;white-space:nowrap">Drag your photos<br>onto any image.</div><div class="t" style="left:312.0px;top:115.0px;font-size:10.6px;line-height:12.2px;font-family:'Liberation Serif',serif;font-weight:700;color:#222">Heading</div><div class="abs" style="left:312px;top:140px;width:85px;height:78px;background:#f3f2f0"></div><div class="abs" style="left:332px;top:158px;width:45px;height:42px;background:#ddd;border-radius:5px"></div><div class="p" style="left:312.0px;top:231.0px;width:90.0px;font-size:10.40px;line-height:15.00px;font-family:'Liberation Serif',serif;font-weight:700;color:#333;white-space:nowrap">Drag your photos<br>onto any image.</div><div class="abs" style="left:51px;top:172px;width:45px;height:28px;background:#ead9b4;border-radius:0 0 5px 5px"></div><div class="t" style="left:150.0px;top:169.0px;font-size:13.0px;line-height:14.9px;font-weight:700;color:#d9f2d2">abc</div><div class="abs" style="left:31px;top:289px;width:90px;height:29px;background:#175c19"></div><div class="abs" style="left:125px;top:289px;width:90px;height:29px;background:#2d7d32"></div><div class="abs" style="left:219px;top:289px;width:90px;height:29px;background:#5aa45e"></div><div class="abs" style="left:313px;top:289px;width:90px;height:29px;background:#9cc99e"></div><div class="t" style="left:38.0px;top:296.0px;font-size:10.4px;line-height:12.0px;font-family:'Liberation Serif',serif;font-weight:700;color:#fff">Day</div><div class="t" style="left:132.0px;top:296.0px;font-size:10.4px;line-height:12.0px;font-family:'Liberation Serif',serif;font-weight:700;color:#fff">Subject</div><div class="t" style="left:226.0px;top:296.0px;font-size:10.4px;line-height:12.0px;font-family:'Liberation Serif',serif;font-weight:700;color:#fff">Subject</div><div class="abs" style="left:31px;top:322px;width:90px;height:88px;background:#7edc88"></div><div class="t" style="left:39.0px;top:360.0px;font-size:11.0px;line-height:12.6px;font-family:'Liberation Serif',serif;font-weight:700;color:#14401a">Monday</div><div class="abs" style="left:125px;top:322px;width:280px;height:88px;background:#f7f7f7"></div><div class="abs" style="left:31px;top:416px;width:90px;height:87px;background:#7edc88"></div><div class="t" style="left:39.0px;top:454.0px;font-size:11.0px;line-height:12.6px;font-family:'Liberation Serif',serif;font-weight:700;color:#14401a">Tuesday</div><div class="abs" style="left:125px;top:416px;width:280px;height:87px;background:#f7f7f7"></div><div class="abs" style="left:31px;top:509px;width:90px;height:90px;background:#7edc88"></div><div class="t" style="left:39.0px;top:547.0px;font-size:11.0px;line-height:12.6px;font-family:'Liberation Serif',serif;font-weight:700;color:#14401a"></div><div class="abs" style="left:125px;top:509px;width:280px;height:90px;background:#f7f7f7"></div></div></div>
</div>
<div class="abs" style="left:1785px;top:0;width:30px;height:1260px;background:#fafafa;border-left:1px solid #e6e6e6"></div>
<div class="abs" style="left:1793px;top:83px;width:16px;height:142px;border-radius:8px;background:#c2c2c2"></div>
<div id="foot"><div class="btn" style="left:1513px;width:124px;background:#fff;color:#222;box-shadow:0 0 0 .8px rgba(0,0,0,.12),0 1.500px 3px rgba(0,0,0,.22)">Cancel</div><div class="btn" style="left:1653px;width:122px;background:linear-gradient(180deg,#ffb733 0,#ffa416 100%);color:#fff;box-shadow:0 1px 2px rgba(190,110,0,.35)">Create</div></div>
</div>
</div>
<div id="dock">
<div class="di" style="left:21.2px;background:#2b9af3;"><svg width="104" height="104" viewBox="0 0 104 104" style="position:absolute;left:0;top:0"><defs><linearGradient id="fdl" x1="0" x2="0" y1="0" y2="1"><stop offset="0" stop-color="#29b8f9"/><stop offset="1" stop-color="#2b7ef0"/></linearGradient><linearGradient id="fdr" x1="0" x2="0" y1="0" y2="1"><stop offset="0" stop-color="#f3f5f8"/><stop offset="1" stop-color="#dfe3ea"/></linearGradient></defs><rect width="104" height="104" fill="url(#fdl)"/><path d="M56 0C48 18 44 38 44 60h14c-1 16 1 32 5 44H104V0z" fill="url(#fdr)"/><path d="M20 70c18 16 46 16 64-2" fill="none" stroke="#1b1b1f" stroke-width="3" stroke-linecap="round"/><rect x="26" y="30" width="4.500" height="10" rx="2.200" fill="#1b1b1f"/><rect x="74" y="30" width="4.500" height="10" rx="2.200" fill="#1b1b1f"/></svg></div>
<div class="di" style="left:157.1px;background:#ddd0e4;"><svg width="104" height="104" viewBox="0 0 104 104" style="position:absolute;left:0;top:0"><defs><linearGradient id="lpg" x1="0" x2="0" y1="0" y2="1"><stop offset="0" stop-color="#fff" stop-opacity=".28"/><stop offset=".5" stop-color="#fff" stop-opacity="0"/><stop offset="1" stop-color="#000" stop-opacity=".16"/></linearGradient></defs><rect x="17.0" y="17.5" width="19.500" height="19.500" rx="5.500" fill="#34d84a"/><rect x="17.0" y="17.5" width="19.500" height="19.500" rx="5.500" fill="url(#lpg)"/><rect x="42.2" y="17.5" width="19.500" height="19.500" rx="5.500" fill="#ffc61a"/><rect x="42.2" y="17.5" width="19.500" height="19.500" rx="5.500" fill="url(#lpg)"/><rect x="67.4" y="17.5" width="19.500" height="19.500" rx="5.500" fill="#ff9a14"/><rect x="67.4" y="17.5" width="19.500" height="19.500" rx="5.500" fill="url(#lpg)"/><rect x="17.0" y="42.7" width="19.500" height="19.500" rx="5.500" fill="#f0271c"/><rect x="17.0" y="42.7" width="19.500" height="19.500" rx="5.500" fill="url(#lpg)"/><rect x="42.2" y="42.7" width="19.500" height="19.500" rx="5.500" fill="#b4bcc4"/><rect x="42.2" y="42.7" width="19.500" height="19.500" rx="5.500" fill="url(#lpg)"/><rect x="67.4" y="42.7" width="19.500" height="19.500" rx="5.500" fill="#ff4a62"/><rect x="67.4" y="42.7" width="19.500" height="19.500" rx="5.500" fill="url(#lpg)"/><rect x="17.0" y="67.9" width="19.500" height="19.500" rx="5.500" fill="#b04fe0"/><rect x="17.0" y="67.9" width="19.500" height="19.500" rx="5.500" fill="url(#lpg)"/><rect x="42.2" y="67.9" width="19.500" height="19.500" rx="5.500" fill="#2aa3ff"/><rect x="42.2" y="67.9" width="19.500" height="19.500" rx="5.500" fill="url(#lpg)"/><rect x="67.4" y="67.9" width="19.500" height="19.500" rx="5.500" fill="#22d0a0"/><rect x="67.4" y="67.9" width="19.500" height="19.500" rx="5.500" fill="url(#lpg)"/></svg></div>
<div class="di" style="left:293.1px;background:#f4f4f6;"><svg width="104" height="104" viewBox="0 0 104 104" style="position:absolute;left:0;top:0"><defs><linearGradient id="sfg" x1="0" x2="0" y1="0" y2="1"><stop offset="0" stop-color="#2aa7f2"/><stop offset="1" stop-color="#1d6fe0"/></linearGradient><linearGradient id="sfb" x1="0" x2="0" y1="0" y2="1"><stop offset="0" stop-color="#ffffff"/><stop offset="1" stop-color="#e4e4e6"/></linearGradient></defs><rect width="104" height="104" fill="url(#sfb)"/><circle cx="52" cy="52" r="44.500" fill="url(#sfg)"/><g stroke="#fff" stroke-width="1.100" opacity=".9"><path d="M90.5 52.0L83.5 52.0"/><path d="M90.3 56.0L85.8 55.6"/><path d="M89.7 60.0L82.8 58.5"/><path d="M88.6 63.9L84.3 62.5"/><path d="M87.2 67.7L80.8 64.8"/><path d="M85.3 71.2L81.4 69.0"/><path d="M83.1 74.6L77.5 70.5"/><path d="M80.6 77.8L77.3 74.8"/><path d="M77.8 80.6L73.1 75.4"/><path d="M74.6 83.1L72.0 79.5"/><path d="M71.2 85.3L67.8 79.3"/><path d="M67.7 87.2L65.8 83.1"/><path d="M63.9 88.6L61.7 82.0"/><path d="M60.0 89.7L59.1 85.3"/><path d="M56.0 90.3L55.3 83.3"/><path d="M52.0 90.5L52.0 86.0"/><path d="M48.0 90.3L48.7 83.3"/><path d="M44.0 89.7L44.9 85.3"/><path d="M40.1 88.6L42.3 82.0"/><path d="M36.3 87.2L38.2 83.1"/><path d="M32.8 85.3L36.3 79.3"/><path d="M29.4 83.1L32.0 79.5"/><path d="M26.2 80.6L30.9 75.4"/><path d="M23.4 77.8L26.7 74.8"/><path d="M20.9 74.6L26.5 70.5"/><path d="M18.7 71.2L22.6 69.0"/><path d="M16.8 67.7L23.2 64.8"/><path d="M15.4 63.9L19.7 62.5"/><path d="M14.3 60.0L21.2 58.5"/><path d="M13.7 56.0L18.2 55.6"/><path d="M13.5 52.0L20.5 52.0"/><path d="M13.7 48.0L18.2 48.4"/><path d="M14.3 44.0L21.2 45.5"/><path d="M15.4 40.1L19.7 41.5"/><path d="M16.8 36.3L23.2 39.2"/><path d="M18.7 32.8L22.6 35.0"/><path d="M20.9 29.4L26.5 33.5"/><path d="M23.4 26.2L26.7 29.2"/><path d="M26.2 23.4L30.9 28.6"/><path d="M29.4 20.9L32.0 24.5"/><path d="M32.7 18.7L36.2 24.7"/><path d="M36.3 16.8L38.2 20.9"/><path d="M40.1 15.4L42.3 22.0"/><path d="M44.0 14.3L44.9 18.7"/><path d="M48.0 13.7L48.7 20.7"/><path d="M52.0 13.5L52.0 18.0"/><path d="M56.0 13.7L55.3 20.7"/><path d="M60.0 14.3L59.1 18.7"/><path d="M63.9 15.4L61.7 22.0"/><path d="M67.7 16.8L65.8 20.9"/><path d="M71.2 18.7L67.8 24.7"/><path d="M74.6 20.9L72.0 24.5"/><path d="M77.8 23.4L73.1 28.6"/><path d="M80.6 26.2L77.3 29.2"/><path d="M83.1 29.4L77.5 33.5"/><path d="M85.3 32.7L81.4 35.0"/><path d="M87.2 36.3L80.8 39.2"/><path d="M88.6 40.1L84.3 41.5"/><path d="M89.7 44.0L82.8 45.5"/><path d="M90.3 48.0L85.8 48.4"/></g><path d="M84 21L48.800 48.800 55.200 55.200z" fill="#f2453a"/><path d="M20 83L55.200 55.200 48.800 48.800z" fill="#f6f6f6"/><path d="M20 83L52 52 55.200 55.200z" fill="#cfd2d6"/><path d="M84 21L52 52 55.200 55.200z" fill="#c4281f"/></svg></div>
<div class="di" style="left:429.0px;background:#2bd14a;"><svg width="104" height="104" viewBox="0 0 104 104" style="position:absolute;left:0;top:0"><defs><linearGradient id="msg" x1="0" x2="0" y1="0" y2="1"><stop offset="0" stop-color="#62f07c"/><stop offset="1" stop-color="#19c336"/></linearGradient><radialGradient id="msb" cx=".5" cy=".3" r=".8"><stop offset="0" stop-color="#ffffff"/><stop offset=".6" stop-color="#eaf7ec"/><stop offset="1" stop-color="#bfe6c6"/></radialGradient></defs><rect width="104" height="104" fill="url(#msg)"/><path d="M52 18c-22 0-39 14.500-39 32.500 0 11 6.500 20.500 16.500 26.500-.6 4-3 7.500-6 10 6 .2 12.500-2.200 17-6 3.600.8 7.500 1.200 11.500 1.200 22 0 39-14 39-31.700S74 18 52 18z" fill="url(#msb)"/></svg></div>
<div class="di" style="left:565.0px;background:#1f8ef7;"><svg width="104" height="104" viewBox="0 0 104 104" style="position:absolute;left:0;top:0"><defs><linearGradient id="mlg" x1="0" x2="0" y1="0" y2="1"><stop offset="0" stop-color="#2176f5"/><stop offset="1" stop-color="#1dc4fb"/></linearGradient><linearGradient id="mle" x1="0" x2="0" y1="0" y2="1"><stop offset="0" stop-color="#ffffff"/><stop offset="1" stop-color="#dcdcdc"/></linearGradient></defs><rect width="104" height="104" fill="url(#mlg)"/><rect x="15" y="29" width="74" height="47" rx="6" fill="url(#mle)"/><path d="M16 32L45 56c4 3.500 10 3.500 14 0L88 32" fill="none" stroke="#b9b9b9" stroke-width="2"/><path d="M17 74L42 53M87 74L62 53" fill="none" stroke="#c8c8c8" stroke-width="1.800"/></svg></div>
<div class="di" style="left:701.0px;background:#fff;"><svg width="104" height="104" viewBox="0 0 104 104" style="position:absolute;left:0;top:0"><rect width="104" height="104" fill="#fefefe"/><ellipse cx="52" cy="29.500" rx="14" ry="21.500" fill="#f7a21b" opacity=".8" transform="rotate(0 52 52)"/><ellipse cx="52" cy="29.500" rx="14" ry="21.500" fill="#f1dc1f" opacity=".8" transform="rotate(45 52 52)"/><ellipse cx="52" cy="29.500" rx="14" ry="21.500" fill="#a6cf3a" opacity=".8" transform="rotate(90 52 52)"/><ellipse cx="52" cy="29.500" rx="14" ry="21.500" fill="#4db24b" opacity=".8" transform="rotate(135 52 52)"/><ellipse cx="52" cy="29.500" rx="14" ry="21.500" fill="#4a9fe0" opacity=".8" transform="rotate(180 52 52)"/><ellipse cx="52" cy="29.500" rx="14" ry="21.500" fill="#6c72d4" opacity=".8" transform="rotate(225 52 52)"/><ellipse cx="52" cy="29.500" rx="14" ry="21.500" fill="#c65fb2" opacity=".8" transform="rotate(270 52 52)"/><ellipse cx="52" cy="29.500" rx="14" ry="21.500" fill="#ef4a3c" opacity=".8" transform="rotate(315 52 52)"/><circle cx="52" cy="52" r="1.600" fill="#fff"/></svg></div>
<div class="di" style="left:836.9px;background:#f6f4ee;"><svg width="104" height="104" viewBox="0 0 104 104" style="position:absolute;left:0;top:0"><defs><linearGradient id="ntt" x1="0" x2="0" y1="0" y2="1"><stop offset="0" stop-color="#ffd84a"/><stop offset="1" stop-color="#fcc015"/></linearGradient><linearGradient id="ntb" x1="0" x2="0" y1="0" y2="1"><stop offset="0" stop-color="#fbfaf6"/><stop offset="1" stop-color="#ebe9e2"/></linearGradient></defs><rect width="104" height="104" fill="url(#ntb)"/><rect width="104" height="27" fill="url(#ntt)"/><path d="M0 28.500H104" stroke="#c9a53a" stroke-width="1.600" stroke-dasharray="1.600 2.400"/><path d="M0 52.500H104M0 78.500H104" stroke="#cfccc4" stroke-width="1.300"/></svg></div>
<div class="di" style="left:972.8px;background:#fb3350;"><svg width="104" height="104" viewBox="0 0 104 104" style="position:absolute;left:0;top:0"><defs><linearGradient id="mug" x1="0" x2="0" y1="0" y2="1"><stop offset="0" stop-color="#ff4a60"/><stop offset="1" stop-color="#f9243f"/></linearGradient></defs><rect width="104" height="104" fill="url(#mug)"/><path d="M76 17L40 25c-2 .5-3 1.800-3 4v41.500c0 2.500-1.500 4-4 4.700l-4.500 1.200c-5 1.400-8 4.600-8 9 0 5 4 8.300 9.500 7.300 7.500-1.400 12-5.800 12-13.500V42.500L70 35.500V62c0 2.500-1.500 4-4 4.700l-4.500 1.200c-5 1.400-8 4.600-8 9 0 5 4 8.300 9.500 7.300 7.500-1.400 13-5.800 13-13.500V19.800c0-2.200-1-3.300-3-2.800z" fill="#fff"/></svg></div>
<div class="di" style="left:1108.8px;background:#1d8ef3;"><svg width="104" height="104" viewBox="0 0 104 104" style="position:absolute;left:0;top:0"><defs><linearGradient id="asg" x1="0" x2="0" y1="0" y2="1"><stop offset="0" stop-color="#1fb4f7"/><stop offset="1" stop-color="#1a6cee"/></linearGradient></defs><rect width="104" height="104" fill="url(#asg)"/><g stroke="#fff" stroke-width="8" stroke-linecap="round" fill="none"><path d="M58 21L28 73"/><path d="M46 21L70 62.500M75 72L79 79"/><path d="M17 65H58M70 65H87"/><path d="M22 80L25 75"/></g></svg></div>
<div class="di" style="left:1244.8px;background:#bbb;"><svg width="104" height="104" viewBox="0 0 104 104" style="position:absolute;left:0;top:0"><defs><linearGradient id="spg" x1="0" x2="0" y1="0" y2="1"><stop offset="0" stop-color="#e4e6e8"/><stop offset="1" stop-color="#9c9ea0"/></linearGradient></defs><rect width="104" height="104" fill="url(#spg)"/><circle cx="52" cy="52" r="39.500" fill="#55575a"/><rect x="50.600" y="7.500" width="2.800" height="6.500" fill="#55575a" transform="rotate(0.0 52 52)"/><rect x="50.600" y="7.500" width="2.800" height="6.500" fill="#55575a" transform="rotate(7.5 52 52)"/><rect x="50.600" y="7.500" width="2.800" height="6.500" fill="#55575a" transform="rotate(15.0 52 52)"/><rect x="50.600" y="7.500" width="2.800" height="6.500" fill="#55575a" transform="rotate(22.5 52 52)"/><rect x="50.600" y="7.500" width="2.800" height="6.500" fill="#55575a" transform="rotate(30.0 52 52)"/><rect x="50.600" y="7.500" width="2.800" height="6.500" fill="#55575a" transform="rotate(37.5 52 52)"/><rect x="50.600" y="7.500" width="2.800" height="6.500" fill="#55575a" transform="rotate(45.0 52 52)"/><rect x="50.600" y="7.500" width="2.800" height="6.500" fill="#55575a" transform="rotate(52.5 52 52)"/><rect x="50.600" y="7.500" width="2.800" height="6.500" fill="#55575a" transform="rotate(60.0 52 52)"/><rect x="50.600" y="7.500" width="2.800" height="6.500" fill="#55575a" transform="rotate(67.5 52 52)"/><rect x="50.600" y="7.500" width="2.800" height="6.500" fill="#55575a" transform="rotate(75.0 52 52)"/><rect x="50.600" y="7.500" width="2.800" height="6.500" fill="#55575a" transform="rotate(82.5 52 52)"/><rect x="50.600" y="7.500" width="2.800" height="6.500" fill="#55575a" transform="rotate(90.0 52 52)"/><rect x="50.600" y="7.500" width="2.800" height="6.500" fill="#55575a" transform="rotate(97.5 52 52)"/><rect x="50.600" y="7.500" width="2.800" height="6.500" fill="#55575a" transform="rotate(105.0 52 52)"/><rect x="50.600" y="7.500" width="2.800" height="6.500" fill="#55575a" transform="rotate(112.5 52 52)"/><rect x="50.600" y="7.500" width="2.800" height="6.500" fill="#55575a" transform="rotate(120.0 52 52)"/><rect x="50.600" y="7.500" width="2.800" height="6.500" fill="#55575a" transform="rotate(127.5 52 52)"/><rect x="50.600" y="7.500" width="2.800" height="6.500" fill="#55575a" transform="rotate(135.0 52 52)"/><rect x="50.600" y="7.500" width="2.800" height="6.500" fill="#55575a" transform="rotate(142.5 52 52)"/><rect x="50.600" y="7.500" width="2.800" height="6.500" fill="#55575a" transform="rotate(150.0 52 52)"/><rect x="50.600" y="7.500" width="2.800" height="6.500" fill="#55575a" transform="rotate(157.5 52 52)"/><rect x="50.600" y="7.500" width="2.800" height="6.500" fill="#55575a" transform="rotate(165.0 52 52)"/><rect x="50.600" y="7.500" width="2.800" height="6.500" fill="#55575a" transform="rotate(172.5 52 52)"/><rect x="50.600" y="7.500" width="2.800" height="6.500" fill="#55575a" transform="rotate(180.0 52 52)"/><rect x="50.600" y="7.500" width="2.800" height="6.500" fill="#55575a" transform="rotate(187.5 52 52)"/><rect x="50.600" y="7.500" width="2.800" height="6.500" fill="#55575a" transform="rotate(195.0 52 52)"/><rect x="50.600" y="7.500" width="2.800" height="6.500" fill="#55575a" transform="rotate(202.5 52 52)"/><rect x="50.600" y="7.500" width="2.800" height="6.500" fill="#55575a" transform="rotate(210.0 52 52)"/><rect x="50.600" y="7.500" width="2.800" height="6.500" fill="#55575a" transform="rotate(217.5 52 52)"/><rect x="50.600" y="7.500" width="2.800" height="6.500" fill="#55575a" transform="rotate(225.0 52 52)"/><rect x="50.600" y="7.500" width="2.800" height="6.500" fill="#55575a" transform="rotate(232.5 52 52)"/><rect x="50.600" y="7.500" width="2.800" height="6.500" fill="#55575a" transform="rotate(240.0 52 52)"/><rect x="50.600" y="7.500" width="2.800" height="6.500" fill="#55575a" transform="rotate(247.5 52 52)"/><rect x="50.600" y="7.500" width="2.800" height="6.500" fill="#55575a" transform="rotate(255.0 52 52)"/><rect x="50.600" y="7.500" width="2.800" height="6.500" fill="#55575a" transform="rotate(262.5 52 52)"/><rect x="50.600" y="7.500" width="2.800" height="6.500" fill="#55575a" transform="rotate(270.0 52 52)"/><rect x="50.600" y="7.500" width="2.800" height="6.500" fill="#55575a" transform="rotate(277.5 52 52)"/><rect x="50.600" y="7.500" width="2.800" height="6.500" fill="#55575a" transform="rotate(285.0 52 52)"/><rect x="50.600" y="7.500" width="2.800" height="6.500" fill="#55575a" transform="rotate(292.5 52 52)"/><rect x="50.600" y="7.500" width="2.800" height="6.500" fill="#55575a" transform="rotate(300.0 52 52)"/><rect x="50.600" y="7.500" width="2.800" height="6.500" fill="#55575a" transform="rotate(307.5 52 52)"/><rect x="50.600" y="7.500" width="2.800" height="6.500" fill="#55575a" transform="rotate(315.0 52 52)"/><rect x="50.600" y="7.500" width="2.800" height="6.500" fill="#55575a" transform="rotate(322.5 52 52)"/><rect x="50.600" y="7.500" width="2.800" height="6.500" fill="#55575a" transform="rotate(330.0 52 52)"/><rect x="50.600" y="7.500" width="2.800" height="6.500" fill="#55575a" transform="rotate(337.5 52 52)"/><rect x="50.600" y="7.500" width="2.800" height="6.500" fill="#55575a" transform="rotate(345.0 52 52)"/><rect x="50.600" y="7.500" width="2.800" height="6.500" fill="#55575a" transform="rotate(352.5 52 52)"/><circle cx="52" cy="52" r="35.500" fill="#b4b6b8"/><circle cx="52" cy="52" r="33" fill="#5a5c5f"/><circle cx="52" cy="52" r="29.500" fill="#8a8c8f"/><rect x="50.700" y="22.500" width="2.600" height="4.500" fill="#55575a" transform="rotate(0.0 52 52)"/><rect x="50.700" y="22.500" width="2.600" height="4.500" fill="#55575a" transform="rotate(12.0 52 52)"/><rect x="50.700" y="22.500" width="2.600" height="4.500" fill="#55575a" transform="rotate(24.0 52 52)"/><rect x="50.700" y="22.500" width="2.600" height="4.500" fill="#55575a" transform="rotate(36.0 52 52)"/><rect x="50.700" y="22.500" width="2.600" height="4.500" fill="#55575a" transform="rotate(48.0 52 52)"/><rect x="50.700" y="22.500" width="2.600" height="4.500" fill="#55575a" transform="rotate(60.0 52 52)"/><rect x="50.700" y="22.500" width="2.600" height="4.500" fill="#55575a" transform="rotate(72.0 52 52)"/><rect x="50.700" y="22.500" width="2.600" height="4.500" fill="#55575a" transform="rotate(84.0 52 52)"/><rect x="50.700" y="22.500" width="2.600" height="4.500" fill="#55575a" transform="rotate(96.0 52 52)"/><rect x="50.700" y="22.500" width="2.600" height="4.500" fill="#55575a" transform="rotate(108.0 52 52)"/><rect x="50.700" y="22.500" width="2.600" height="4.500" fill="#55575a" transform="rotate(120.0 52 52)"/><rect x="50.700" y="22.500" width="2.600" height="4.500" fill="#55575a" transform="rotate(132.0 52 52)"/><rect x="50.700" y="22.500" width="2.600" height="4.500" fill="#55575a" transform="rotate(144.0 52 52)"/><rect x="50.700" y="22.500" width="2.600" height="4.500" fill="#55575a" transform="rotate(156.0 52 52)"/><rect x="50.700" y="22.500" width="2.600" height="4.500" fill="#55575a" transform="rotate(168.0 52 52)"/><rect x="50.700" y="22.500" width="2.600" height="4.500" fill="#55575a" transform="rotate(180.0 52 52)"/><rect x="50.700" y="22.500" width="2.600" height="4.500" fill="#55575a" transform="rotate(192.0 52 52)"/><rect x="50.700" y="22.500" width="2.600" height="4.500" fill="#55575a" transform="rotate(204.0 52 52)"/><rect x="50.700" y="22.500" width="2.600" height="4.500" fill="#55575a" transform="rotate(216.0 52 52)"/><rect x="50.700" y="22.500" width="2.600" height="4.500" fill="#55575a" transform="rotate(228.0 52 52)"/><rect x="50.700" y="22.500" width="2.600" height="4.500" fill="#55575a" transform="rotate(240.0 52 52)"/><rect x="50.700" y="22.500" width="2.600" height="4.500" fill="#55575a" transform="rotate(252.0 52 52)"/><rect x="50.700" y="22.500" width="2.600" height="4.500" fill="#55575a" transform="rotate(264.0 52 52)"/><rect x="50.700" y="22.500" width="2.600" height="4.500" fill="#55575a" transform="rotate(276.0 52 52)"/><rect x="50.700" y="22.500" width="2.600" height="4.500" fill="#55575a" transform="rotate(288.0 52 52)"/><rect x="50.700" y="22.500" width="2.600" height="4.500" fill="#55575a" transform="rotate(300.0 52 52)"/><rect x="50.700" y="22.500" width="2.600" height="4.500" fill="#55575a" transform="rotate(312.0 52 52)"/><rect x="50.700" y="22.500" width="2.600" height="4.500" fill="#55575a" transform="rotate(324.0 52 52)"/><rect x="50.700" y="22.500" width="2.600" height="4.500" fill="#55575a" transform="rotate(336.0 52 52)"/><rect x="50.700" y="22.500" width="2.600" height="4.500" fill="#55575a" transform="rotate(348.0 52 52)"/><circle cx="52" cy="52" r="22.500" fill="#8a8c8f"/><circle cx="52" cy="52" r="20" fill="#4e5053"/><g stroke="#c2c4c6" stroke-width="4.500" stroke-linecap="round"><path d="M52 52L82 52M52 52L37 26M52 52L37 78"/></g><circle cx="52" cy="52" r="20" fill="none" stroke="#c2c4c6" stroke-width="3"/><circle cx="52" cy="52" r="2.600" fill="#55575a"/></svg></div>
<div class="di" style="left:1380.7px;background:linear-gradient(180deg,#e8740a 0,#d2470a 42%,#a61403 72%,#8c0802 100%)"><svg width="104" height="104" viewBox="0 0 104 104" style="position:absolute;left:0;top:0"><defs><linearGradient id="pgp" x1="0" x2="1" y1="1" y2="0"><stop offset="0" stop-color="#ffb01f"/><stop offset=".5" stop-color="#ff8a18"/><stop offset="1" stop-color="#f9761a"/></linearGradient></defs><path d="M17 86l5.500-17L72 20.500c3.500-3.500 8.500-3.500 11.500-.5s3 7.500-.5 11L33.500 80z" fill="url(#pgp)"/><path d="M22.500 69L72 20.500c2-2 4.500-3 6.500-2.800L24.500 74z" fill="#ffa53a" opacity=".7"/><rect x="26" y="83" width="57" height="6" rx="3" fill="#ffa620"/></svg></div>
<div class="abs" style="left:1531px;top:19px;width:2px;height:117px;background:rgba(70,20,120,.55)"></div>
<svg class="abs" style="left:1568px;top:22px" width="122" height="106" viewBox="0 0 122 106"><defs><linearGradient id="flb" x1="0" x2="0" y1="0" y2="1"><stop offset="0" stop-color="#38a5ea"/><stop offset="1" stop-color="#2b8fd8"/></linearGradient><linearGradient id="flf" x1="0" x2="0" y1="0" y2="1"><stop offset="0" stop-color="#84d0fb"/><stop offset="1" stop-color="#5fbbf5"/></linearGradient></defs><path d="M2 10c0-4.500 3-7.500 7.500-7.500H36c3 0 5 1 7 3l4 4c2 2 4 3 7 3h58c4.500 0 7.500 3 7.500 7.500V92H2z" fill="url(#flb)"/><rect x="2" y="20" width="118" height="82" rx="7" fill="url(#flf)"/><path d="M2 90H120" stroke="#4fa9e6" stroke-width="1.500" opacity=".6"/><circle cx="61" cy="56" r="22.500" fill="#3f9fe4"/><path d="M61 45V66M52 57.500L61 66.500 70 57.500" fill="none" stroke="#8fd3fb" stroke-width="3.200" stroke-linecap="round" stroke-linejoin="round"/></svg>
<svg class="abs" style="left:1718px;top:22px" width="96" height="110" viewBox="0 0 96 110"><defs><linearGradient id="trb" x1="0" x2="1" y1="0" y2="0"><stop offset="0" stop-color="#f4f4f6"/><stop offset=".45" stop-color="#e6e6ea"/><stop offset=".8" stop-color="#d4d4da"/><stop offset="1" stop-color="#e8e8ec"/></linearGradient><linearGradient id="trt" x1="0" x2="0" y1="0" y2="1"><stop offset="0" stop-color="#c9c8d0"/><stop offset="1" stop-color="#dedde4"/></linearGradient></defs><path d="M2 14L13 96c.8 5 5 8.500 10 9.500 8 1.700 42 1.700 50 0 5-1 9.200-4.500 10-9.500L94 14z" fill="url(#trb)"/><ellipse cx="48" cy="14" rx="46" ry="12" fill="url(#trt)"/><ellipse cx="48" cy="14" rx="46" ry="12" fill="none" stroke="#f6f6f8" stroke-width="2"/></svg>
<div class="abs" style="left:69px;top:146px;width:7px;height:7px;border-radius:50%;background:#14061f"></div>
<div class="abs" style="left:1429px;top:146px;width:7px;height:7px;border-radius:50%;background:#2a0a58"></div>
</div>
</body>
</html>
